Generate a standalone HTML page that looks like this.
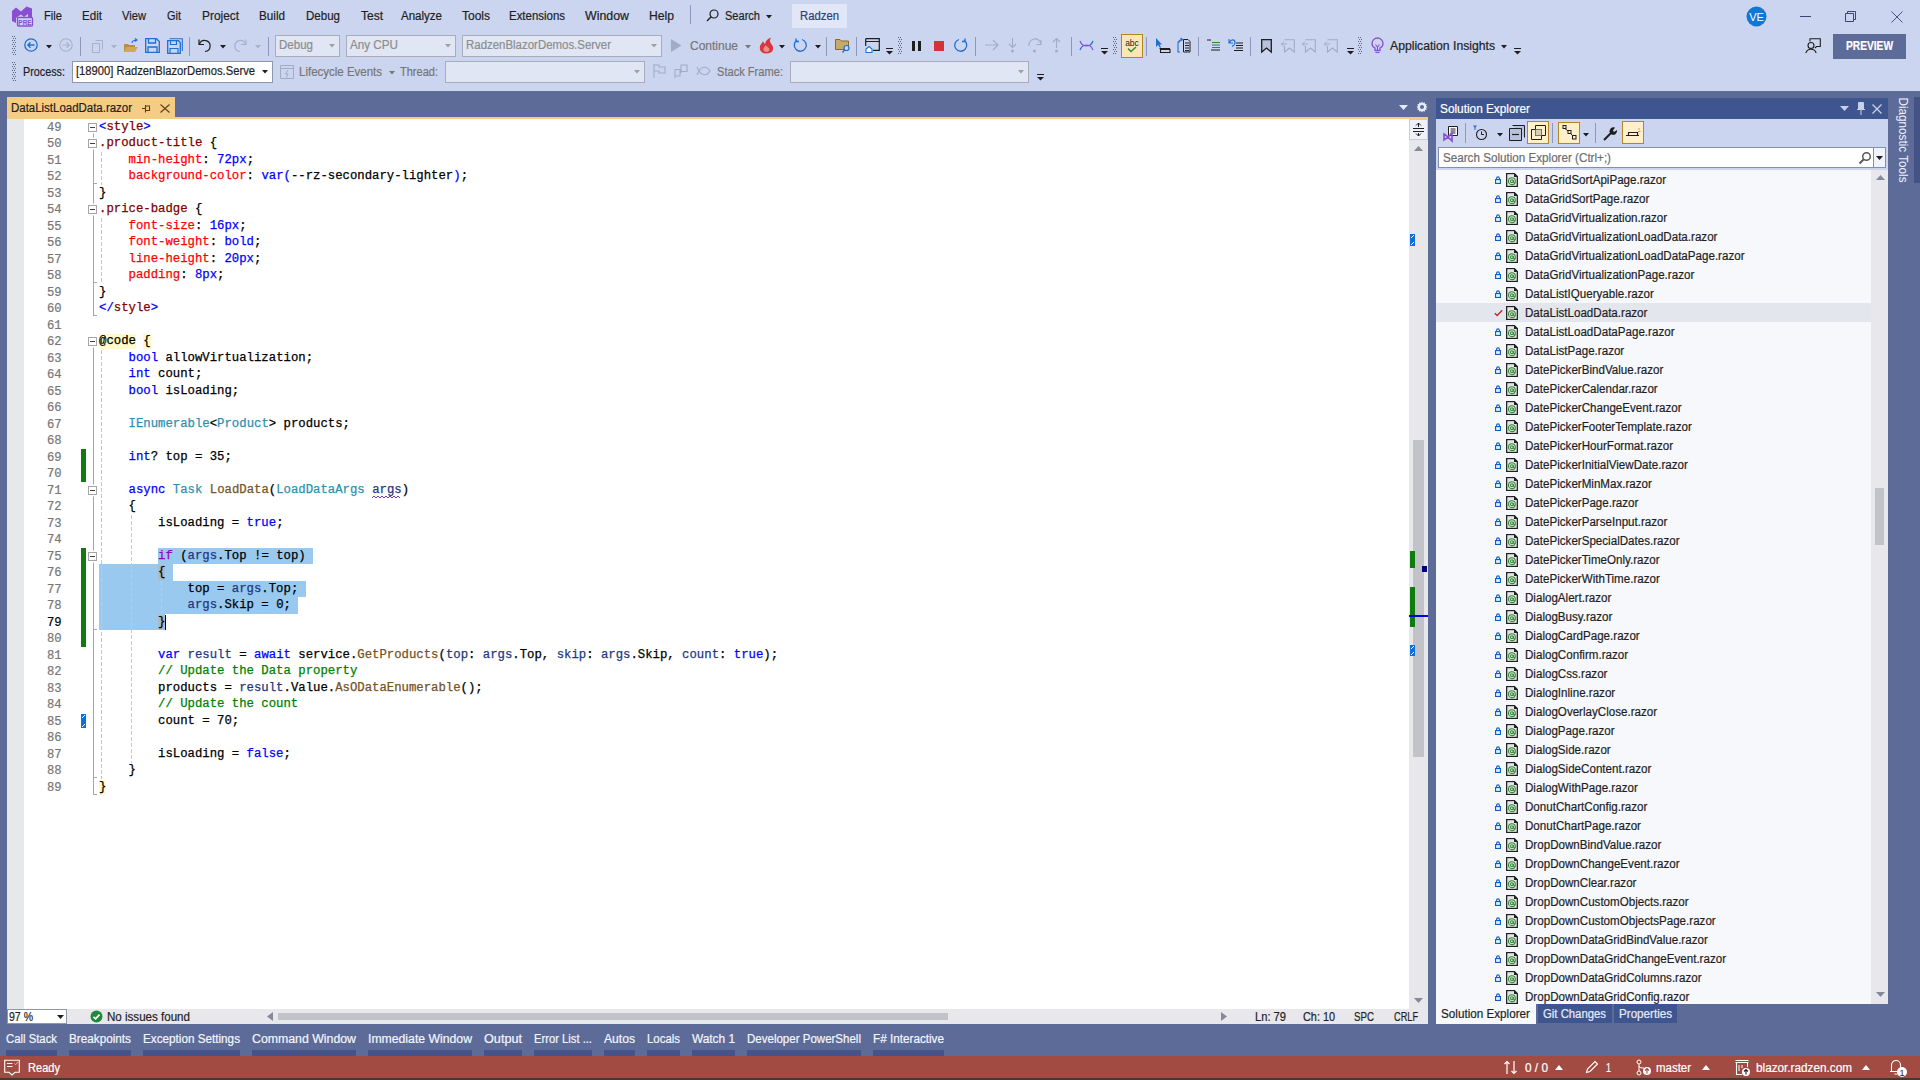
<!DOCTYPE html>
<html><head><meta charset="utf-8"><style>
html,body{margin:0;padding:0;}
body{width:1920px;height:1080px;overflow:hidden;position:relative;background:#ccd5f0;font-family:"Liberation Sans",sans-serif;}
.r{position:absolute;}
svg.r{display:block;overflow:visible}
.t{position:absolute;white-space:pre;line-height:1;transform-origin:0 0;font-family:"Liberation Sans",sans-serif;-webkit-text-stroke:0.2px currentColor;}
.cl{position:absolute;left:99px;height:16.5px;line-height:16.5px;white-space:pre;font-family:"Liberation Mono",monospace;font-size:12.31px;-webkit-text-stroke:0.25px currentColor;}
.ln{position:absolute;left:23px;margin-top:1px;width:38.5px;text-align:right;height:16.5px;line-height:16.5px;white-space:pre;font-family:"Liberation Mono",monospace;font-size:12.17px;-webkit-text-stroke:0.2px currentColor;}
</style></head><body>
<div class="r" style="left:0px;top:91px;width:1920px;height:965px;background:#5d6b99;"></div><div class="r" style="left:0px;top:1056px;width:1920px;height:24px;background:#a14b42;"></div><div class="r" style="left:0px;top:1078px;width:1920px;height:2px;background:#4a3434;"></div><div class="r" style="left:690px;top:5px;width:1px;height:19px;background:#8e98b8;"></div><div class="r" style="left:792px;top:4px;width:55px;height:24px;background:#e1e7f7;"></div><div class="r" style="left:7px;top:97px;width:168px;height:20px;background:#f5cc84;"></div><div class="r" style="left:7px;top:117px;width:1421px;height:2px;background:#f5cc84;"></div><svg class="r" style="left:142px;top:105px" width="9" height="8"><path d="M0 3.5H3.5M3.5 0V7.5" fill="none" stroke="#5c3f1a" stroke-width="1.1"/><path d="M3.5 1H7.5V5.5H3.5" fill="none" stroke="#5c3f1a" stroke-width="1.1"/></svg><svg class="r" style="left:160px;top:104px" width="10" height="9"><path d="M0.5 0.5L9.5 8.5M9.5 0.5L0.5 8.5" stroke="#5c3f1a" stroke-width="1.1"/></svg><div class="r" style="left:7px;top:119px;width:1402px;height:890px;background:#ffffff;"></div><div class="r" style="left:7px;top:119px;width:17px;height:890px;background:#e7e8ec;"></div><div class="r" style="left:1409px;top:119px;width:19px;height:890px;background:#e8e8ec;"></div><div class="r" style="left:1409px;top:119px;width:19px;height:21px;background:#eef1fb;border:1px solid #c5cde6;box-sizing:border-box;"></div><div class="r" style="left:1413px;top:440px;width:11px;height:317px;background:#c2c3c9;"></div><div class="r" style="left:7px;top:1009px;width:1421px;height:15px;background:#e8e8ec;"></div><div class="r" style="left:158.07999999999998px;top:548px;width:155.08499999999998px;height:16px;background:#99c9ef;"></div><div class="r" style="left:99px;top:564px;width:73.85px;height:17px;background:#99c9ef;"></div><div class="r" style="left:99px;top:581px;width:206.77999999999997px;height:16px;background:#99c9ef;"></div><div class="r" style="left:99px;top:597px;width:199.39499999999998px;height:17px;background:#99c9ef;"></div><div class="r" style="left:99px;top:614px;width:66.465px;height:16px;background:#99c9ef;"></div><div class="r" style="left:158.07999999999998px;top:565px;width:7.385px;height:15px;background:#a9bccc;"></div><div class="r" style="left:158.07999999999998px;top:615px;width:7.385px;height:15px;background:#a9bccc;"></div><div class="r" style="left:99px;top:333.5px;width:36.925px;height:15px;background:#fffac8;"></div><div class="r" style="left:143.31px;top:333.5px;width:7.385px;height:15px;background:#fffac8;"></div><div class="r" style="left:99px;top:779.5px;width:7.385px;height:15px;background:#fffac8;"></div><div class="r" style="left:101.0px;top:152px;width:1px;height:32.5px;background:repeating-linear-gradient(to bottom,#c8c8c8 0 4px,transparent 4px 6px)"></div><div class="r" style="left:101.0px;top:218px;width:1px;height:65.5px;background:repeating-linear-gradient(to bottom,#c8c8c8 0 4px,transparent 4px 6px)"></div><div class="r" style="left:101.0px;top:350px;width:1px;height:428.5px;background:repeating-linear-gradient(to bottom,#c8c8c8 0 4px,transparent 4px 6px)"></div><div class="r" style="left:131.0px;top:515px;width:1px;height:247.5px;background:repeating-linear-gradient(to bottom,#c8c8c8 0 4px,transparent 4px 6px)"></div><div class="r" style="left:161.0px;top:581px;width:1px;height:32.5px;background:repeating-linear-gradient(to bottom,#c8c8c8 0 4px,transparent 4px 6px)"></div><div class="r" style="left:81px;top:449px;width:5px;height:33.0px;background:#107c10;"></div><div class="r" style="left:81px;top:548px;width:5px;height:99.0px;background:#107c10;"></div><svg class="r" style="left:81px;top:714px" width="5" height="14"><rect width="5" height="14" fill="#0f6fd8"/><path d="M1 4L4 1M1 13L4 10" stroke="#fff" stroke-width="1"/></svg><div class="r" style="left:93px;top:131px;width:1px;height:184.5px;background:#a5a5a5;"></div><div class="r" style="left:93px;top:345px;width:1px;height:449.5px;background:#a5a5a5;"></div><div class="r" style="left:93px;top:183.0px;width:4px;height:1px;background:#a5a5a5;"></div><div class="r" style="left:93px;top:282.0px;width:4px;height:1px;background:#a5a5a5;"></div><div class="r" style="left:93px;top:315.0px;width:4px;height:1px;background:#a5a5a5;"></div><div class="r" style="left:93px;top:629.0px;width:4px;height:1px;background:#a5a5a5;"></div><div class="r" style="left:93px;top:777.0px;width:4px;height:1px;background:#a5a5a5;"></div><div class="r" style="left:93px;top:794.0px;width:4px;height:1px;background:#a5a5a5;"></div><div class="r" style="left:88px;top:122.5px;width:9px;height:9px;box-sizing:border-box;border:1px solid #a5a5a5;background:#fff;box-shadow:0 0 0 1.5px #fff"></div><div class="r" style="left:90px;top:126.5px;width:5px;height:1px;background:#404040;"></div><div class="r" style="left:88px;top:138.5px;width:9px;height:9px;box-sizing:border-box;border:1px solid #a5a5a5;background:#fff;box-shadow:0 0 0 1.5px #fff"></div><div class="r" style="left:90px;top:142.5px;width:5px;height:1px;background:#404040;"></div><div class="r" style="left:88px;top:204.5px;width:9px;height:9px;box-sizing:border-box;border:1px solid #a5a5a5;background:#fff;box-shadow:0 0 0 1.5px #fff"></div><div class="r" style="left:90px;top:208.5px;width:5px;height:1px;background:#404040;"></div><div class="r" style="left:88px;top:336.5px;width:9px;height:9px;box-sizing:border-box;border:1px solid #a5a5a5;background:#fff;box-shadow:0 0 0 1.5px #fff"></div><div class="r" style="left:90px;top:340.5px;width:5px;height:1px;background:#404040;"></div><div class="r" style="left:88px;top:485.5px;width:9px;height:9px;box-sizing:border-box;border:1px solid #a5a5a5;background:#fff;box-shadow:0 0 0 1.5px #fff"></div><div class="r" style="left:90px;top:489.5px;width:5px;height:1px;background:#404040;"></div><div class="r" style="left:88px;top:551.5px;width:9px;height:9px;box-sizing:border-box;border:1px solid #a5a5a5;background:#fff;box-shadow:0 0 0 1.5px #fff"></div><div class="r" style="left:90px;top:555.5px;width:5px;height:1px;background:#404040;"></div><div class="cl" style="top:119px"><span style="color:#0000ff">&lt;</span><span style="color:#800000">style</span><span style="color:#0000ff">&gt;</span></div><div class="ln" style="top:119px;color:#767676">49</div><div class="cl" style="top:135px"><span style="color:#800000">.product-title</span><span style="color:#000000"> {</span></div><div class="ln" style="top:135px;color:#767676">50</div><div class="cl" style="top:152px"><span style="color:#000000">    </span><span style="color:#ff0000">min-height</span><span style="color:#000000">: </span><span style="color:#0000ff">72px</span><span style="color:#000000">;</span></div><div class="ln" style="top:152px;color:#767676">51</div><div class="cl" style="top:168px"><span style="color:#000000">    </span><span style="color:#ff0000">background-color</span><span style="color:#000000">: </span><span style="color:#0000ff">var(</span><span style="color:#000000">--rz-secondary-lighter</span><span style="color:#0000ff">)</span><span style="color:#000000">;</span></div><div class="ln" style="top:168px;color:#767676">52</div><div class="cl" style="top:185px"><span style="color:#000000">}</span></div><div class="ln" style="top:185px;color:#767676">53</div><div class="cl" style="top:201px"><span style="color:#800000">.price-badge</span><span style="color:#000000"> {</span></div><div class="ln" style="top:201px;color:#767676">54</div><div class="cl" style="top:218px"><span style="color:#000000">    </span><span style="color:#ff0000">font-size</span><span style="color:#000000">: </span><span style="color:#0000ff">16px</span><span style="color:#000000">;</span></div><div class="ln" style="top:218px;color:#767676">55</div><div class="cl" style="top:234px"><span style="color:#000000">    </span><span style="color:#ff0000">font-weight</span><span style="color:#000000">: </span><span style="color:#0000ff">bold</span><span style="color:#000000">;</span></div><div class="ln" style="top:234px;color:#767676">56</div><div class="cl" style="top:251px"><span style="color:#000000">    </span><span style="color:#ff0000">line-height</span><span style="color:#000000">: </span><span style="color:#0000ff">20px</span><span style="color:#000000">;</span></div><div class="ln" style="top:251px;color:#767676">57</div><div class="cl" style="top:267px"><span style="color:#000000">    </span><span style="color:#ff0000">padding</span><span style="color:#000000">: </span><span style="color:#0000ff">8px</span><span style="color:#000000">;</span></div><div class="ln" style="top:267px;color:#767676">58</div><div class="cl" style="top:284px"><span style="color:#000000">}</span></div><div class="ln" style="top:284px;color:#767676">59</div><div class="cl" style="top:300px"><span style="color:#0000ff">&lt;/</span><span style="color:#800000">style</span><span style="color:#0000ff">&gt;</span></div><div class="ln" style="top:300px;color:#767676">60</div><div class="cl" style="top:317px"></div><div class="ln" style="top:317px;color:#767676">61</div><div class="cl" style="top:333px"><span style="color:#000000">@code {</span></div><div class="ln" style="top:333px;color:#767676">62</div><div class="cl" style="top:350px"><span style="color:#000000">    </span><span style="color:#0000ff">bool</span><span style="color:#000000"> allowVirtualization;</span></div><div class="ln" style="top:350px;color:#767676">63</div><div class="cl" style="top:366px"><span style="color:#000000">    </span><span style="color:#0000ff">int</span><span style="color:#000000"> count;</span></div><div class="ln" style="top:366px;color:#767676">64</div><div class="cl" style="top:383px"><span style="color:#000000">    </span><span style="color:#0000ff">bool</span><span style="color:#000000"> isLoading;</span></div><div class="ln" style="top:383px;color:#767676">65</div><div class="cl" style="top:399px"></div><div class="ln" style="top:399px;color:#767676">66</div><div class="cl" style="top:416px"><span style="color:#000000">    </span><span style="color:#2b91af">IEnumerable</span><span style="color:#000000">&lt;</span><span style="color:#2b91af">Product</span><span style="color:#000000">&gt; products;</span></div><div class="ln" style="top:416px;color:#767676">67</div><div class="cl" style="top:432px"></div><div class="ln" style="top:432px;color:#767676">68</div><div class="cl" style="top:449px"><span style="color:#000000">    </span><span style="color:#0000ff">int</span><span style="color:#000000">? top = 35;</span></div><div class="ln" style="top:449px;color:#767676">69</div><div class="cl" style="top:465px"></div><div class="ln" style="top:465px;color:#767676">70</div><div class="cl" style="top:482px"><span style="color:#000000">    </span><span style="color:#0000ff">async</span><span style="color:#000000"> </span><span style="color:#2b91af">Task</span><span style="color:#000000"> </span><span style="color:#74531f">LoadData</span><span style="color:#000000">(</span><span style="color:#2b91af">LoadDataArgs</span><span style="color:#000000"> </span><span style="color:#1f377f">args</span><span style="color:#000000">)</span></div><div class="ln" style="top:482px;color:#767676">71</div><div class="cl" style="top:498px"><span style="color:#000000">    {</span></div><div class="ln" style="top:498px;color:#767676">72</div><div class="cl" style="top:515px"><span style="color:#000000">        isLoading = </span><span style="color:#0000ff">true</span><span style="color:#000000">;</span></div><div class="ln" style="top:515px;color:#767676">73</div><div class="cl" style="top:531px"></div><div class="ln" style="top:531px;color:#767676">74</div><div class="cl" style="top:548px"><span style="color:#000000">        </span><span style="color:#8f08c4">if</span><span style="color:#000000"> (</span><span style="color:#1f377f">args</span><span style="color:#000000">.Top != top)</span></div><div class="ln" style="top:548px;color:#767676">75</div><div class="cl" style="top:564px"><span style="color:#000000">        {</span></div><div class="ln" style="top:564px;color:#767676">76</div><div class="cl" style="top:581px"><span style="color:#000000">            top = </span><span style="color:#1f377f">args</span><span style="color:#000000">.Top;</span></div><div class="ln" style="top:581px;color:#767676">77</div><div class="cl" style="top:597px"><span style="color:#000000">            </span><span style="color:#1f377f">args</span><span style="color:#000000">.Skip = 0;</span></div><div class="ln" style="top:597px;color:#767676">78</div><div class="cl" style="top:614px"><span style="color:#000000">        }</span></div><div class="ln" style="top:614px;color:#000000">79</div><div class="cl" style="top:630px"></div><div class="ln" style="top:630px;color:#767676">80</div><div class="cl" style="top:647px"><span style="color:#000000">        </span><span style="color:#0000ff">var</span><span style="color:#000000"> </span><span style="color:#1f377f">result</span><span style="color:#000000"> = </span><span style="color:#0000ff">await</span><span style="color:#000000"> service.</span><span style="color:#74531f">GetProducts</span><span style="color:#000000">(</span><span style="color:#1f377f">top</span><span style="color:#000000">: </span><span style="color:#1f377f">args</span><span style="color:#000000">.Top, </span><span style="color:#1f377f">skip</span><span style="color:#000000">: </span><span style="color:#1f377f">args</span><span style="color:#000000">.Skip, </span><span style="color:#1f377f">count</span><span style="color:#000000">: </span><span style="color:#0000ff">true</span><span style="color:#000000">);</span></div><div class="ln" style="top:647px;color:#767676">81</div><div class="cl" style="top:663px"><span style="color:#000000">        </span><span style="color:#008000">// Update the Data property</span></div><div class="ln" style="top:663px;color:#767676">82</div><div class="cl" style="top:680px"><span style="color:#000000">        products = </span><span style="color:#1f377f">result</span><span style="color:#000000">.Value.</span><span style="color:#74531f">AsODataEnumerable</span><span style="color:#000000">();</span></div><div class="ln" style="top:680px;color:#767676">83</div><div class="cl" style="top:696px"><span style="color:#000000">        </span><span style="color:#008000">// Update the count</span></div><div class="ln" style="top:696px;color:#767676">84</div><div class="cl" style="top:713px"><span style="color:#000000">        count = 70;</span></div><div class="ln" style="top:713px;color:#767676">85</div><div class="cl" style="top:729px"></div><div class="ln" style="top:729px;color:#767676">86</div><div class="cl" style="top:746px"><span style="color:#000000">        isLoading = </span><span style="color:#0000ff">false</span><span style="color:#000000">;</span></div><div class="ln" style="top:746px;color:#767676">87</div><div class="cl" style="top:762px"><span style="color:#000000">    }</span></div><div class="ln" style="top:762px;color:#767676">88</div><div class="cl" style="top:779px"><span style="color:#000000">}</span></div><div class="ln" style="top:779px;color:#767676">89</div><svg class="r" style="left:372.2px;top:495px" width="30" height="4"><path d="M0 3 L2 1 L4 3 L6 1 L8 3 L10 1 L12 3 L14 1 L16 3 L18 1 L20 3 L22 1 L24 3 L26 1 L28 3" fill="none" stroke="#6a3fc1" stroke-width="1"/></svg><div class="r" style="left:165.465px;top:615px;width:1px;height:15px;background:#000;"></div><div class="r" style="left:1410px;top:551px;width:5px;height:17px;background:#107c10;"></div><div class="r" style="left:1410px;top:587px;width:5px;height:40px;background:#107c10;"></div><div class="r" style="left:1409px;top:615px;width:19px;height:2px;background:#0000e0;"></div><div class="r" style="left:1422px;top:566px;width:5px;height:6px;background:#00007f;"></div><svg class="r" style="left:1410px;top:645px" width="5" height="11"><rect width="5" height="11" fill="#0f6fd8"/><path d="M1 4L4 1M1 10L4 7" stroke="#fff" stroke-width="1"/></svg><svg class="r" style="left:1410px;top:234px" width="5" height="12"><rect width="5" height="12" fill="#0f6fd8"/><path d="M1 4L4 1M1 11L4 8" stroke="#fff" stroke-width="1"/></svg><div class="r" style="left:1436px;top:98px;width:452px;height:21px;background:#3f5590;"></div><div class="r" style="left:1436px;top:119px;width:452px;height:51px;background:#ccd5f0;"></div><div class="r" style="left:1438px;top:147px;width:448px;height:21px;box-sizing:border-box;border:1px solid #8390ad;background:#fff"></div><div class="r" style="left:1874px;top:148px;width:11px;height:19px;background:#f0f3fc;"></div><div class="r" style="left:1873px;top:148px;width:1px;height:19px;background:#8390ad;"></div><div class="r" style="left:1436px;top:170px;width:435px;height:834px;background:#f6f8fc;"></div><div class="r" style="left:1871px;top:170px;width:17px;height:834px;background:#e8e8ec;"></div><div class="r" style="left:1875px;top:488px;width:9px;height:57px;background:#c2c3c9;"></div><svg class="r" style="left:1495px;top:175.9px" width="6" height="8" viewBox="0 0 6 8"><path d="M1.6 3.6V2.3A1.4 1.4 0 0 1 4.4 2.3V3.6" fill="none" stroke="#0a5fc4" stroke-width="1.1"/><rect x="0.55" y="3.55" width="4.9" height="3.9" fill="#e8eef8" stroke="#0a5fc4" stroke-width="1.1"/></svg><svg class="r" style="left:1506px;top:173.10000000000002px" width="12" height="14" viewBox="0 0 12 14"><path d="M0.7 0.7H8.4L11.3 3.6V13.3H0.7Z" fill="#fff" stroke="#1e1e1e" stroke-width="1.3"/><path d="M2 2H7.8V4.3H10V12H2Z" fill="#e3e4ea"/><path d="M8 0.4V4H11.6Z" fill="#1e1e1e"/><circle cx="5.9" cy="8.2" r="3.4" fill="none" stroke="#2e8b2e" stroke-width="1.1"/><circle cx="5.9" cy="8.2" r="1.4" fill="none" stroke="#2e8b2e" stroke-width="1.1"/><path d="M7.3 7V9.2C7.3 10 8.6 10.2 9.2 9" fill="none" stroke="#2e8b2e" stroke-width="1"/></svg><svg class="r" style="left:1495px;top:194.9px" width="6" height="8" viewBox="0 0 6 8"><path d="M1.6 3.6V2.3A1.4 1.4 0 0 1 4.4 2.3V3.6" fill="none" stroke="#0a5fc4" stroke-width="1.1"/><rect x="0.55" y="3.55" width="4.9" height="3.9" fill="#e8eef8" stroke="#0a5fc4" stroke-width="1.1"/></svg><svg class="r" style="left:1506px;top:192.10000000000002px" width="12" height="14" viewBox="0 0 12 14"><path d="M0.7 0.7H8.4L11.3 3.6V13.3H0.7Z" fill="#fff" stroke="#1e1e1e" stroke-width="1.3"/><path d="M2 2H7.8V4.3H10V12H2Z" fill="#e3e4ea"/><path d="M8 0.4V4H11.6Z" fill="#1e1e1e"/><circle cx="5.9" cy="8.2" r="3.4" fill="none" stroke="#2e8b2e" stroke-width="1.1"/><circle cx="5.9" cy="8.2" r="1.4" fill="none" stroke="#2e8b2e" stroke-width="1.1"/><path d="M7.3 7V9.2C7.3 10 8.6 10.2 9.2 9" fill="none" stroke="#2e8b2e" stroke-width="1"/></svg><svg class="r" style="left:1495px;top:213.9px" width="6" height="8" viewBox="0 0 6 8"><path d="M1.6 3.6V2.3A1.4 1.4 0 0 1 4.4 2.3V3.6" fill="none" stroke="#0a5fc4" stroke-width="1.1"/><rect x="0.55" y="3.55" width="4.9" height="3.9" fill="#e8eef8" stroke="#0a5fc4" stroke-width="1.1"/></svg><svg class="r" style="left:1506px;top:211.10000000000002px" width="12" height="14" viewBox="0 0 12 14"><path d="M0.7 0.7H8.4L11.3 3.6V13.3H0.7Z" fill="#fff" stroke="#1e1e1e" stroke-width="1.3"/><path d="M2 2H7.8V4.3H10V12H2Z" fill="#e3e4ea"/><path d="M8 0.4V4H11.6Z" fill="#1e1e1e"/><circle cx="5.9" cy="8.2" r="3.4" fill="none" stroke="#2e8b2e" stroke-width="1.1"/><circle cx="5.9" cy="8.2" r="1.4" fill="none" stroke="#2e8b2e" stroke-width="1.1"/><path d="M7.3 7V9.2C7.3 10 8.6 10.2 9.2 9" fill="none" stroke="#2e8b2e" stroke-width="1"/></svg><svg class="r" style="left:1495px;top:232.9px" width="6" height="8" viewBox="0 0 6 8"><path d="M1.6 3.6V2.3A1.4 1.4 0 0 1 4.4 2.3V3.6" fill="none" stroke="#0a5fc4" stroke-width="1.1"/><rect x="0.55" y="3.55" width="4.9" height="3.9" fill="#e8eef8" stroke="#0a5fc4" stroke-width="1.1"/></svg><svg class="r" style="left:1506px;top:230.10000000000002px" width="12" height="14" viewBox="0 0 12 14"><path d="M0.7 0.7H8.4L11.3 3.6V13.3H0.7Z" fill="#fff" stroke="#1e1e1e" stroke-width="1.3"/><path d="M2 2H7.8V4.3H10V12H2Z" fill="#e3e4ea"/><path d="M8 0.4V4H11.6Z" fill="#1e1e1e"/><circle cx="5.9" cy="8.2" r="3.4" fill="none" stroke="#2e8b2e" stroke-width="1.1"/><circle cx="5.9" cy="8.2" r="1.4" fill="none" stroke="#2e8b2e" stroke-width="1.1"/><path d="M7.3 7V9.2C7.3 10 8.6 10.2 9.2 9" fill="none" stroke="#2e8b2e" stroke-width="1"/></svg><svg class="r" style="left:1495px;top:251.9px" width="6" height="8" viewBox="0 0 6 8"><path d="M1.6 3.6V2.3A1.4 1.4 0 0 1 4.4 2.3V3.6" fill="none" stroke="#0a5fc4" stroke-width="1.1"/><rect x="0.55" y="3.55" width="4.9" height="3.9" fill="#e8eef8" stroke="#0a5fc4" stroke-width="1.1"/></svg><svg class="r" style="left:1506px;top:249.10000000000002px" width="12" height="14" viewBox="0 0 12 14"><path d="M0.7 0.7H8.4L11.3 3.6V13.3H0.7Z" fill="#fff" stroke="#1e1e1e" stroke-width="1.3"/><path d="M2 2H7.8V4.3H10V12H2Z" fill="#e3e4ea"/><path d="M8 0.4V4H11.6Z" fill="#1e1e1e"/><circle cx="5.9" cy="8.2" r="3.4" fill="none" stroke="#2e8b2e" stroke-width="1.1"/><circle cx="5.9" cy="8.2" r="1.4" fill="none" stroke="#2e8b2e" stroke-width="1.1"/><path d="M7.3 7V9.2C7.3 10 8.6 10.2 9.2 9" fill="none" stroke="#2e8b2e" stroke-width="1"/></svg><svg class="r" style="left:1495px;top:270.90000000000003px" width="6" height="8" viewBox="0 0 6 8"><path d="M1.6 3.6V2.3A1.4 1.4 0 0 1 4.4 2.3V3.6" fill="none" stroke="#0a5fc4" stroke-width="1.1"/><rect x="0.55" y="3.55" width="4.9" height="3.9" fill="#e8eef8" stroke="#0a5fc4" stroke-width="1.1"/></svg><svg class="r" style="left:1506px;top:268.1px" width="12" height="14" viewBox="0 0 12 14"><path d="M0.7 0.7H8.4L11.3 3.6V13.3H0.7Z" fill="#fff" stroke="#1e1e1e" stroke-width="1.3"/><path d="M2 2H7.8V4.3H10V12H2Z" fill="#e3e4ea"/><path d="M8 0.4V4H11.6Z" fill="#1e1e1e"/><circle cx="5.9" cy="8.2" r="3.4" fill="none" stroke="#2e8b2e" stroke-width="1.1"/><circle cx="5.9" cy="8.2" r="1.4" fill="none" stroke="#2e8b2e" stroke-width="1.1"/><path d="M7.3 7V9.2C7.3 10 8.6 10.2 9.2 9" fill="none" stroke="#2e8b2e" stroke-width="1"/></svg><svg class="r" style="left:1495px;top:289.90000000000003px" width="6" height="8" viewBox="0 0 6 8"><path d="M1.6 3.6V2.3A1.4 1.4 0 0 1 4.4 2.3V3.6" fill="none" stroke="#0a5fc4" stroke-width="1.1"/><rect x="0.55" y="3.55" width="4.9" height="3.9" fill="#e8eef8" stroke="#0a5fc4" stroke-width="1.1"/></svg><svg class="r" style="left:1506px;top:287.1px" width="12" height="14" viewBox="0 0 12 14"><path d="M0.7 0.7H8.4L11.3 3.6V13.3H0.7Z" fill="#fff" stroke="#1e1e1e" stroke-width="1.3"/><path d="M2 2H7.8V4.3H10V12H2Z" fill="#e3e4ea"/><path d="M8 0.4V4H11.6Z" fill="#1e1e1e"/><circle cx="5.9" cy="8.2" r="3.4" fill="none" stroke="#2e8b2e" stroke-width="1.1"/><circle cx="5.9" cy="8.2" r="1.4" fill="none" stroke="#2e8b2e" stroke-width="1.1"/><path d="M7.3 7V9.2C7.3 10 8.6 10.2 9.2 9" fill="none" stroke="#2e8b2e" stroke-width="1"/></svg><div class="r" style="left:1436px;top:303.3px;width:435px;height:19px;background:#e4e6ee;"></div><svg class="r" style="left:1494px;top:309.3px" width="9" height="8" viewBox="0 0 9 8"><path d="M0.8 4.2L3.2 6.6L8.2 1.2" fill="none" stroke="#c4262d" stroke-width="1.4"/></svg><svg class="r" style="left:1506px;top:306.1px" width="12" height="14" viewBox="0 0 12 14"><path d="M0.7 0.7H8.4L11.3 3.6V13.3H0.7Z" fill="#fff" stroke="#1e1e1e" stroke-width="1.3"/><path d="M2 2H7.8V4.3H10V12H2Z" fill="#e3e4ea"/><path d="M8 0.4V4H11.6Z" fill="#1e1e1e"/><circle cx="5.9" cy="8.2" r="3.4" fill="none" stroke="#2e8b2e" stroke-width="1.1"/><circle cx="5.9" cy="8.2" r="1.4" fill="none" stroke="#2e8b2e" stroke-width="1.1"/><path d="M7.3 7V9.2C7.3 10 8.6 10.2 9.2 9" fill="none" stroke="#2e8b2e" stroke-width="1"/></svg><svg class="r" style="left:1495px;top:327.90000000000003px" width="6" height="8" viewBox="0 0 6 8"><path d="M1.6 3.6V2.3A1.4 1.4 0 0 1 4.4 2.3V3.6" fill="none" stroke="#0a5fc4" stroke-width="1.1"/><rect x="0.55" y="3.55" width="4.9" height="3.9" fill="#e8eef8" stroke="#0a5fc4" stroke-width="1.1"/></svg><svg class="r" style="left:1506px;top:325.1px" width="12" height="14" viewBox="0 0 12 14"><path d="M0.7 0.7H8.4L11.3 3.6V13.3H0.7Z" fill="#fff" stroke="#1e1e1e" stroke-width="1.3"/><path d="M2 2H7.8V4.3H10V12H2Z" fill="#e3e4ea"/><path d="M8 0.4V4H11.6Z" fill="#1e1e1e"/><circle cx="5.9" cy="8.2" r="3.4" fill="none" stroke="#2e8b2e" stroke-width="1.1"/><circle cx="5.9" cy="8.2" r="1.4" fill="none" stroke="#2e8b2e" stroke-width="1.1"/><path d="M7.3 7V9.2C7.3 10 8.6 10.2 9.2 9" fill="none" stroke="#2e8b2e" stroke-width="1"/></svg><svg class="r" style="left:1495px;top:346.90000000000003px" width="6" height="8" viewBox="0 0 6 8"><path d="M1.6 3.6V2.3A1.4 1.4 0 0 1 4.4 2.3V3.6" fill="none" stroke="#0a5fc4" stroke-width="1.1"/><rect x="0.55" y="3.55" width="4.9" height="3.9" fill="#e8eef8" stroke="#0a5fc4" stroke-width="1.1"/></svg><svg class="r" style="left:1506px;top:344.1px" width="12" height="14" viewBox="0 0 12 14"><path d="M0.7 0.7H8.4L11.3 3.6V13.3H0.7Z" fill="#fff" stroke="#1e1e1e" stroke-width="1.3"/><path d="M2 2H7.8V4.3H10V12H2Z" fill="#e3e4ea"/><path d="M8 0.4V4H11.6Z" fill="#1e1e1e"/><circle cx="5.9" cy="8.2" r="3.4" fill="none" stroke="#2e8b2e" stroke-width="1.1"/><circle cx="5.9" cy="8.2" r="1.4" fill="none" stroke="#2e8b2e" stroke-width="1.1"/><path d="M7.3 7V9.2C7.3 10 8.6 10.2 9.2 9" fill="none" stroke="#2e8b2e" stroke-width="1"/></svg><svg class="r" style="left:1495px;top:365.90000000000003px" width="6" height="8" viewBox="0 0 6 8"><path d="M1.6 3.6V2.3A1.4 1.4 0 0 1 4.4 2.3V3.6" fill="none" stroke="#0a5fc4" stroke-width="1.1"/><rect x="0.55" y="3.55" width="4.9" height="3.9" fill="#e8eef8" stroke="#0a5fc4" stroke-width="1.1"/></svg><svg class="r" style="left:1506px;top:363.1px" width="12" height="14" viewBox="0 0 12 14"><path d="M0.7 0.7H8.4L11.3 3.6V13.3H0.7Z" fill="#fff" stroke="#1e1e1e" stroke-width="1.3"/><path d="M2 2H7.8V4.3H10V12H2Z" fill="#e3e4ea"/><path d="M8 0.4V4H11.6Z" fill="#1e1e1e"/><circle cx="5.9" cy="8.2" r="3.4" fill="none" stroke="#2e8b2e" stroke-width="1.1"/><circle cx="5.9" cy="8.2" r="1.4" fill="none" stroke="#2e8b2e" stroke-width="1.1"/><path d="M7.3 7V9.2C7.3 10 8.6 10.2 9.2 9" fill="none" stroke="#2e8b2e" stroke-width="1"/></svg><svg class="r" style="left:1495px;top:384.90000000000003px" width="6" height="8" viewBox="0 0 6 8"><path d="M1.6 3.6V2.3A1.4 1.4 0 0 1 4.4 2.3V3.6" fill="none" stroke="#0a5fc4" stroke-width="1.1"/><rect x="0.55" y="3.55" width="4.9" height="3.9" fill="#e8eef8" stroke="#0a5fc4" stroke-width="1.1"/></svg><svg class="r" style="left:1506px;top:382.1px" width="12" height="14" viewBox="0 0 12 14"><path d="M0.7 0.7H8.4L11.3 3.6V13.3H0.7Z" fill="#fff" stroke="#1e1e1e" stroke-width="1.3"/><path d="M2 2H7.8V4.3H10V12H2Z" fill="#e3e4ea"/><path d="M8 0.4V4H11.6Z" fill="#1e1e1e"/><circle cx="5.9" cy="8.2" r="3.4" fill="none" stroke="#2e8b2e" stroke-width="1.1"/><circle cx="5.9" cy="8.2" r="1.4" fill="none" stroke="#2e8b2e" stroke-width="1.1"/><path d="M7.3 7V9.2C7.3 10 8.6 10.2 9.2 9" fill="none" stroke="#2e8b2e" stroke-width="1"/></svg><svg class="r" style="left:1495px;top:403.90000000000003px" width="6" height="8" viewBox="0 0 6 8"><path d="M1.6 3.6V2.3A1.4 1.4 0 0 1 4.4 2.3V3.6" fill="none" stroke="#0a5fc4" stroke-width="1.1"/><rect x="0.55" y="3.55" width="4.9" height="3.9" fill="#e8eef8" stroke="#0a5fc4" stroke-width="1.1"/></svg><svg class="r" style="left:1506px;top:401.1px" width="12" height="14" viewBox="0 0 12 14"><path d="M0.7 0.7H8.4L11.3 3.6V13.3H0.7Z" fill="#fff" stroke="#1e1e1e" stroke-width="1.3"/><path d="M2 2H7.8V4.3H10V12H2Z" fill="#e3e4ea"/><path d="M8 0.4V4H11.6Z" fill="#1e1e1e"/><circle cx="5.9" cy="8.2" r="3.4" fill="none" stroke="#2e8b2e" stroke-width="1.1"/><circle cx="5.9" cy="8.2" r="1.4" fill="none" stroke="#2e8b2e" stroke-width="1.1"/><path d="M7.3 7V9.2C7.3 10 8.6 10.2 9.2 9" fill="none" stroke="#2e8b2e" stroke-width="1"/></svg><svg class="r" style="left:1495px;top:422.90000000000003px" width="6" height="8" viewBox="0 0 6 8"><path d="M1.6 3.6V2.3A1.4 1.4 0 0 1 4.4 2.3V3.6" fill="none" stroke="#0a5fc4" stroke-width="1.1"/><rect x="0.55" y="3.55" width="4.9" height="3.9" fill="#e8eef8" stroke="#0a5fc4" stroke-width="1.1"/></svg><svg class="r" style="left:1506px;top:420.1px" width="12" height="14" viewBox="0 0 12 14"><path d="M0.7 0.7H8.4L11.3 3.6V13.3H0.7Z" fill="#fff" stroke="#1e1e1e" stroke-width="1.3"/><path d="M2 2H7.8V4.3H10V12H2Z" fill="#e3e4ea"/><path d="M8 0.4V4H11.6Z" fill="#1e1e1e"/><circle cx="5.9" cy="8.2" r="3.4" fill="none" stroke="#2e8b2e" stroke-width="1.1"/><circle cx="5.9" cy="8.2" r="1.4" fill="none" stroke="#2e8b2e" stroke-width="1.1"/><path d="M7.3 7V9.2C7.3 10 8.6 10.2 9.2 9" fill="none" stroke="#2e8b2e" stroke-width="1"/></svg><svg class="r" style="left:1495px;top:441.90000000000003px" width="6" height="8" viewBox="0 0 6 8"><path d="M1.6 3.6V2.3A1.4 1.4 0 0 1 4.4 2.3V3.6" fill="none" stroke="#0a5fc4" stroke-width="1.1"/><rect x="0.55" y="3.55" width="4.9" height="3.9" fill="#e8eef8" stroke="#0a5fc4" stroke-width="1.1"/></svg><svg class="r" style="left:1506px;top:439.1px" width="12" height="14" viewBox="0 0 12 14"><path d="M0.7 0.7H8.4L11.3 3.6V13.3H0.7Z" fill="#fff" stroke="#1e1e1e" stroke-width="1.3"/><path d="M2 2H7.8V4.3H10V12H2Z" fill="#e3e4ea"/><path d="M8 0.4V4H11.6Z" fill="#1e1e1e"/><circle cx="5.9" cy="8.2" r="3.4" fill="none" stroke="#2e8b2e" stroke-width="1.1"/><circle cx="5.9" cy="8.2" r="1.4" fill="none" stroke="#2e8b2e" stroke-width="1.1"/><path d="M7.3 7V9.2C7.3 10 8.6 10.2 9.2 9" fill="none" stroke="#2e8b2e" stroke-width="1"/></svg><svg class="r" style="left:1495px;top:460.90000000000003px" width="6" height="8" viewBox="0 0 6 8"><path d="M1.6 3.6V2.3A1.4 1.4 0 0 1 4.4 2.3V3.6" fill="none" stroke="#0a5fc4" stroke-width="1.1"/><rect x="0.55" y="3.55" width="4.9" height="3.9" fill="#e8eef8" stroke="#0a5fc4" stroke-width="1.1"/></svg><svg class="r" style="left:1506px;top:458.1px" width="12" height="14" viewBox="0 0 12 14"><path d="M0.7 0.7H8.4L11.3 3.6V13.3H0.7Z" fill="#fff" stroke="#1e1e1e" stroke-width="1.3"/><path d="M2 2H7.8V4.3H10V12H2Z" fill="#e3e4ea"/><path d="M8 0.4V4H11.6Z" fill="#1e1e1e"/><circle cx="5.9" cy="8.2" r="3.4" fill="none" stroke="#2e8b2e" stroke-width="1.1"/><circle cx="5.9" cy="8.2" r="1.4" fill="none" stroke="#2e8b2e" stroke-width="1.1"/><path d="M7.3 7V9.2C7.3 10 8.6 10.2 9.2 9" fill="none" stroke="#2e8b2e" stroke-width="1"/></svg><svg class="r" style="left:1495px;top:479.90000000000003px" width="6" height="8" viewBox="0 0 6 8"><path d="M1.6 3.6V2.3A1.4 1.4 0 0 1 4.4 2.3V3.6" fill="none" stroke="#0a5fc4" stroke-width="1.1"/><rect x="0.55" y="3.55" width="4.9" height="3.9" fill="#e8eef8" stroke="#0a5fc4" stroke-width="1.1"/></svg><svg class="r" style="left:1506px;top:477.1px" width="12" height="14" viewBox="0 0 12 14"><path d="M0.7 0.7H8.4L11.3 3.6V13.3H0.7Z" fill="#fff" stroke="#1e1e1e" stroke-width="1.3"/><path d="M2 2H7.8V4.3H10V12H2Z" fill="#e3e4ea"/><path d="M8 0.4V4H11.6Z" fill="#1e1e1e"/><circle cx="5.9" cy="8.2" r="3.4" fill="none" stroke="#2e8b2e" stroke-width="1.1"/><circle cx="5.9" cy="8.2" r="1.4" fill="none" stroke="#2e8b2e" stroke-width="1.1"/><path d="M7.3 7V9.2C7.3 10 8.6 10.2 9.2 9" fill="none" stroke="#2e8b2e" stroke-width="1"/></svg><svg class="r" style="left:1495px;top:498.90000000000003px" width="6" height="8" viewBox="0 0 6 8"><path d="M1.6 3.6V2.3A1.4 1.4 0 0 1 4.4 2.3V3.6" fill="none" stroke="#0a5fc4" stroke-width="1.1"/><rect x="0.55" y="3.55" width="4.9" height="3.9" fill="#e8eef8" stroke="#0a5fc4" stroke-width="1.1"/></svg><svg class="r" style="left:1506px;top:496.1px" width="12" height="14" viewBox="0 0 12 14"><path d="M0.7 0.7H8.4L11.3 3.6V13.3H0.7Z" fill="#fff" stroke="#1e1e1e" stroke-width="1.3"/><path d="M2 2H7.8V4.3H10V12H2Z" fill="#e3e4ea"/><path d="M8 0.4V4H11.6Z" fill="#1e1e1e"/><circle cx="5.9" cy="8.2" r="3.4" fill="none" stroke="#2e8b2e" stroke-width="1.1"/><circle cx="5.9" cy="8.2" r="1.4" fill="none" stroke="#2e8b2e" stroke-width="1.1"/><path d="M7.3 7V9.2C7.3 10 8.6 10.2 9.2 9" fill="none" stroke="#2e8b2e" stroke-width="1"/></svg><svg class="r" style="left:1495px;top:517.9px" width="6" height="8" viewBox="0 0 6 8"><path d="M1.6 3.6V2.3A1.4 1.4 0 0 1 4.4 2.3V3.6" fill="none" stroke="#0a5fc4" stroke-width="1.1"/><rect x="0.55" y="3.55" width="4.9" height="3.9" fill="#e8eef8" stroke="#0a5fc4" stroke-width="1.1"/></svg><svg class="r" style="left:1506px;top:515.0999999999999px" width="12" height="14" viewBox="0 0 12 14"><path d="M0.7 0.7H8.4L11.3 3.6V13.3H0.7Z" fill="#fff" stroke="#1e1e1e" stroke-width="1.3"/><path d="M2 2H7.8V4.3H10V12H2Z" fill="#e3e4ea"/><path d="M8 0.4V4H11.6Z" fill="#1e1e1e"/><circle cx="5.9" cy="8.2" r="3.4" fill="none" stroke="#2e8b2e" stroke-width="1.1"/><circle cx="5.9" cy="8.2" r="1.4" fill="none" stroke="#2e8b2e" stroke-width="1.1"/><path d="M7.3 7V9.2C7.3 10 8.6 10.2 9.2 9" fill="none" stroke="#2e8b2e" stroke-width="1"/></svg><svg class="r" style="left:1495px;top:536.9px" width="6" height="8" viewBox="0 0 6 8"><path d="M1.6 3.6V2.3A1.4 1.4 0 0 1 4.4 2.3V3.6" fill="none" stroke="#0a5fc4" stroke-width="1.1"/><rect x="0.55" y="3.55" width="4.9" height="3.9" fill="#e8eef8" stroke="#0a5fc4" stroke-width="1.1"/></svg><svg class="r" style="left:1506px;top:534.0999999999999px" width="12" height="14" viewBox="0 0 12 14"><path d="M0.7 0.7H8.4L11.3 3.6V13.3H0.7Z" fill="#fff" stroke="#1e1e1e" stroke-width="1.3"/><path d="M2 2H7.8V4.3H10V12H2Z" fill="#e3e4ea"/><path d="M8 0.4V4H11.6Z" fill="#1e1e1e"/><circle cx="5.9" cy="8.2" r="3.4" fill="none" stroke="#2e8b2e" stroke-width="1.1"/><circle cx="5.9" cy="8.2" r="1.4" fill="none" stroke="#2e8b2e" stroke-width="1.1"/><path d="M7.3 7V9.2C7.3 10 8.6 10.2 9.2 9" fill="none" stroke="#2e8b2e" stroke-width="1"/></svg><svg class="r" style="left:1495px;top:555.9px" width="6" height="8" viewBox="0 0 6 8"><path d="M1.6 3.6V2.3A1.4 1.4 0 0 1 4.4 2.3V3.6" fill="none" stroke="#0a5fc4" stroke-width="1.1"/><rect x="0.55" y="3.55" width="4.9" height="3.9" fill="#e8eef8" stroke="#0a5fc4" stroke-width="1.1"/></svg><svg class="r" style="left:1506px;top:553.0999999999999px" width="12" height="14" viewBox="0 0 12 14"><path d="M0.7 0.7H8.4L11.3 3.6V13.3H0.7Z" fill="#fff" stroke="#1e1e1e" stroke-width="1.3"/><path d="M2 2H7.8V4.3H10V12H2Z" fill="#e3e4ea"/><path d="M8 0.4V4H11.6Z" fill="#1e1e1e"/><circle cx="5.9" cy="8.2" r="3.4" fill="none" stroke="#2e8b2e" stroke-width="1.1"/><circle cx="5.9" cy="8.2" r="1.4" fill="none" stroke="#2e8b2e" stroke-width="1.1"/><path d="M7.3 7V9.2C7.3 10 8.6 10.2 9.2 9" fill="none" stroke="#2e8b2e" stroke-width="1"/></svg><svg class="r" style="left:1495px;top:574.9px" width="6" height="8" viewBox="0 0 6 8"><path d="M1.6 3.6V2.3A1.4 1.4 0 0 1 4.4 2.3V3.6" fill="none" stroke="#0a5fc4" stroke-width="1.1"/><rect x="0.55" y="3.55" width="4.9" height="3.9" fill="#e8eef8" stroke="#0a5fc4" stroke-width="1.1"/></svg><svg class="r" style="left:1506px;top:572.0999999999999px" width="12" height="14" viewBox="0 0 12 14"><path d="M0.7 0.7H8.4L11.3 3.6V13.3H0.7Z" fill="#fff" stroke="#1e1e1e" stroke-width="1.3"/><path d="M2 2H7.8V4.3H10V12H2Z" fill="#e3e4ea"/><path d="M8 0.4V4H11.6Z" fill="#1e1e1e"/><circle cx="5.9" cy="8.2" r="3.4" fill="none" stroke="#2e8b2e" stroke-width="1.1"/><circle cx="5.9" cy="8.2" r="1.4" fill="none" stroke="#2e8b2e" stroke-width="1.1"/><path d="M7.3 7V9.2C7.3 10 8.6 10.2 9.2 9" fill="none" stroke="#2e8b2e" stroke-width="1"/></svg><svg class="r" style="left:1495px;top:593.9px" width="6" height="8" viewBox="0 0 6 8"><path d="M1.6 3.6V2.3A1.4 1.4 0 0 1 4.4 2.3V3.6" fill="none" stroke="#0a5fc4" stroke-width="1.1"/><rect x="0.55" y="3.55" width="4.9" height="3.9" fill="#e8eef8" stroke="#0a5fc4" stroke-width="1.1"/></svg><svg class="r" style="left:1506px;top:591.0999999999999px" width="12" height="14" viewBox="0 0 12 14"><path d="M0.7 0.7H8.4L11.3 3.6V13.3H0.7Z" fill="#fff" stroke="#1e1e1e" stroke-width="1.3"/><path d="M2 2H7.8V4.3H10V12H2Z" fill="#e3e4ea"/><path d="M8 0.4V4H11.6Z" fill="#1e1e1e"/><circle cx="5.9" cy="8.2" r="3.4" fill="none" stroke="#2e8b2e" stroke-width="1.1"/><circle cx="5.9" cy="8.2" r="1.4" fill="none" stroke="#2e8b2e" stroke-width="1.1"/><path d="M7.3 7V9.2C7.3 10 8.6 10.2 9.2 9" fill="none" stroke="#2e8b2e" stroke-width="1"/></svg><svg class="r" style="left:1495px;top:612.9px" width="6" height="8" viewBox="0 0 6 8"><path d="M1.6 3.6V2.3A1.4 1.4 0 0 1 4.4 2.3V3.6" fill="none" stroke="#0a5fc4" stroke-width="1.1"/><rect x="0.55" y="3.55" width="4.9" height="3.9" fill="#e8eef8" stroke="#0a5fc4" stroke-width="1.1"/></svg><svg class="r" style="left:1506px;top:610.0999999999999px" width="12" height="14" viewBox="0 0 12 14"><path d="M0.7 0.7H8.4L11.3 3.6V13.3H0.7Z" fill="#fff" stroke="#1e1e1e" stroke-width="1.3"/><path d="M2 2H7.8V4.3H10V12H2Z" fill="#e3e4ea"/><path d="M8 0.4V4H11.6Z" fill="#1e1e1e"/><circle cx="5.9" cy="8.2" r="3.4" fill="none" stroke="#2e8b2e" stroke-width="1.1"/><circle cx="5.9" cy="8.2" r="1.4" fill="none" stroke="#2e8b2e" stroke-width="1.1"/><path d="M7.3 7V9.2C7.3 10 8.6 10.2 9.2 9" fill="none" stroke="#2e8b2e" stroke-width="1"/></svg><svg class="r" style="left:1495px;top:631.9px" width="6" height="8" viewBox="0 0 6 8"><path d="M1.6 3.6V2.3A1.4 1.4 0 0 1 4.4 2.3V3.6" fill="none" stroke="#0a5fc4" stroke-width="1.1"/><rect x="0.55" y="3.55" width="4.9" height="3.9" fill="#e8eef8" stroke="#0a5fc4" stroke-width="1.1"/></svg><svg class="r" style="left:1506px;top:629.0999999999999px" width="12" height="14" viewBox="0 0 12 14"><path d="M0.7 0.7H8.4L11.3 3.6V13.3H0.7Z" fill="#fff" stroke="#1e1e1e" stroke-width="1.3"/><path d="M2 2H7.8V4.3H10V12H2Z" fill="#e3e4ea"/><path d="M8 0.4V4H11.6Z" fill="#1e1e1e"/><circle cx="5.9" cy="8.2" r="3.4" fill="none" stroke="#2e8b2e" stroke-width="1.1"/><circle cx="5.9" cy="8.2" r="1.4" fill="none" stroke="#2e8b2e" stroke-width="1.1"/><path d="M7.3 7V9.2C7.3 10 8.6 10.2 9.2 9" fill="none" stroke="#2e8b2e" stroke-width="1"/></svg><svg class="r" style="left:1495px;top:650.9px" width="6" height="8" viewBox="0 0 6 8"><path d="M1.6 3.6V2.3A1.4 1.4 0 0 1 4.4 2.3V3.6" fill="none" stroke="#0a5fc4" stroke-width="1.1"/><rect x="0.55" y="3.55" width="4.9" height="3.9" fill="#e8eef8" stroke="#0a5fc4" stroke-width="1.1"/></svg><svg class="r" style="left:1506px;top:648.0999999999999px" width="12" height="14" viewBox="0 0 12 14"><path d="M0.7 0.7H8.4L11.3 3.6V13.3H0.7Z" fill="#fff" stroke="#1e1e1e" stroke-width="1.3"/><path d="M2 2H7.8V4.3H10V12H2Z" fill="#e3e4ea"/><path d="M8 0.4V4H11.6Z" fill="#1e1e1e"/><circle cx="5.9" cy="8.2" r="3.4" fill="none" stroke="#2e8b2e" stroke-width="1.1"/><circle cx="5.9" cy="8.2" r="1.4" fill="none" stroke="#2e8b2e" stroke-width="1.1"/><path d="M7.3 7V9.2C7.3 10 8.6 10.2 9.2 9" fill="none" stroke="#2e8b2e" stroke-width="1"/></svg><svg class="r" style="left:1495px;top:669.9px" width="6" height="8" viewBox="0 0 6 8"><path d="M1.6 3.6V2.3A1.4 1.4 0 0 1 4.4 2.3V3.6" fill="none" stroke="#0a5fc4" stroke-width="1.1"/><rect x="0.55" y="3.55" width="4.9" height="3.9" fill="#e8eef8" stroke="#0a5fc4" stroke-width="1.1"/></svg><svg class="r" style="left:1506px;top:667.0999999999999px" width="12" height="14" viewBox="0 0 12 14"><path d="M0.7 0.7H8.4L11.3 3.6V13.3H0.7Z" fill="#fff" stroke="#1e1e1e" stroke-width="1.3"/><path d="M2 2H7.8V4.3H10V12H2Z" fill="#e3e4ea"/><path d="M8 0.4V4H11.6Z" fill="#1e1e1e"/><circle cx="5.9" cy="8.2" r="3.4" fill="none" stroke="#2e8b2e" stroke-width="1.1"/><circle cx="5.9" cy="8.2" r="1.4" fill="none" stroke="#2e8b2e" stroke-width="1.1"/><path d="M7.3 7V9.2C7.3 10 8.6 10.2 9.2 9" fill="none" stroke="#2e8b2e" stroke-width="1"/></svg><svg class="r" style="left:1495px;top:688.9px" width="6" height="8" viewBox="0 0 6 8"><path d="M1.6 3.6V2.3A1.4 1.4 0 0 1 4.4 2.3V3.6" fill="none" stroke="#0a5fc4" stroke-width="1.1"/><rect x="0.55" y="3.55" width="4.9" height="3.9" fill="#e8eef8" stroke="#0a5fc4" stroke-width="1.1"/></svg><svg class="r" style="left:1506px;top:686.0999999999999px" width="12" height="14" viewBox="0 0 12 14"><path d="M0.7 0.7H8.4L11.3 3.6V13.3H0.7Z" fill="#fff" stroke="#1e1e1e" stroke-width="1.3"/><path d="M2 2H7.8V4.3H10V12H2Z" fill="#e3e4ea"/><path d="M8 0.4V4H11.6Z" fill="#1e1e1e"/><circle cx="5.9" cy="8.2" r="3.4" fill="none" stroke="#2e8b2e" stroke-width="1.1"/><circle cx="5.9" cy="8.2" r="1.4" fill="none" stroke="#2e8b2e" stroke-width="1.1"/><path d="M7.3 7V9.2C7.3 10 8.6 10.2 9.2 9" fill="none" stroke="#2e8b2e" stroke-width="1"/></svg><svg class="r" style="left:1495px;top:707.9px" width="6" height="8" viewBox="0 0 6 8"><path d="M1.6 3.6V2.3A1.4 1.4 0 0 1 4.4 2.3V3.6" fill="none" stroke="#0a5fc4" stroke-width="1.1"/><rect x="0.55" y="3.55" width="4.9" height="3.9" fill="#e8eef8" stroke="#0a5fc4" stroke-width="1.1"/></svg><svg class="r" style="left:1506px;top:705.0999999999999px" width="12" height="14" viewBox="0 0 12 14"><path d="M0.7 0.7H8.4L11.3 3.6V13.3H0.7Z" fill="#fff" stroke="#1e1e1e" stroke-width="1.3"/><path d="M2 2H7.8V4.3H10V12H2Z" fill="#e3e4ea"/><path d="M8 0.4V4H11.6Z" fill="#1e1e1e"/><circle cx="5.9" cy="8.2" r="3.4" fill="none" stroke="#2e8b2e" stroke-width="1.1"/><circle cx="5.9" cy="8.2" r="1.4" fill="none" stroke="#2e8b2e" stroke-width="1.1"/><path d="M7.3 7V9.2C7.3 10 8.6 10.2 9.2 9" fill="none" stroke="#2e8b2e" stroke-width="1"/></svg><svg class="r" style="left:1495px;top:726.9px" width="6" height="8" viewBox="0 0 6 8"><path d="M1.6 3.6V2.3A1.4 1.4 0 0 1 4.4 2.3V3.6" fill="none" stroke="#0a5fc4" stroke-width="1.1"/><rect x="0.55" y="3.55" width="4.9" height="3.9" fill="#e8eef8" stroke="#0a5fc4" stroke-width="1.1"/></svg><svg class="r" style="left:1506px;top:724.0999999999999px" width="12" height="14" viewBox="0 0 12 14"><path d="M0.7 0.7H8.4L11.3 3.6V13.3H0.7Z" fill="#fff" stroke="#1e1e1e" stroke-width="1.3"/><path d="M2 2H7.8V4.3H10V12H2Z" fill="#e3e4ea"/><path d="M8 0.4V4H11.6Z" fill="#1e1e1e"/><circle cx="5.9" cy="8.2" r="3.4" fill="none" stroke="#2e8b2e" stroke-width="1.1"/><circle cx="5.9" cy="8.2" r="1.4" fill="none" stroke="#2e8b2e" stroke-width="1.1"/><path d="M7.3 7V9.2C7.3 10 8.6 10.2 9.2 9" fill="none" stroke="#2e8b2e" stroke-width="1"/></svg><svg class="r" style="left:1495px;top:745.9px" width="6" height="8" viewBox="0 0 6 8"><path d="M1.6 3.6V2.3A1.4 1.4 0 0 1 4.4 2.3V3.6" fill="none" stroke="#0a5fc4" stroke-width="1.1"/><rect x="0.55" y="3.55" width="4.9" height="3.9" fill="#e8eef8" stroke="#0a5fc4" stroke-width="1.1"/></svg><svg class="r" style="left:1506px;top:743.0999999999999px" width="12" height="14" viewBox="0 0 12 14"><path d="M0.7 0.7H8.4L11.3 3.6V13.3H0.7Z" fill="#fff" stroke="#1e1e1e" stroke-width="1.3"/><path d="M2 2H7.8V4.3H10V12H2Z" fill="#e3e4ea"/><path d="M8 0.4V4H11.6Z" fill="#1e1e1e"/><circle cx="5.9" cy="8.2" r="3.4" fill="none" stroke="#2e8b2e" stroke-width="1.1"/><circle cx="5.9" cy="8.2" r="1.4" fill="none" stroke="#2e8b2e" stroke-width="1.1"/><path d="M7.3 7V9.2C7.3 10 8.6 10.2 9.2 9" fill="none" stroke="#2e8b2e" stroke-width="1"/></svg><svg class="r" style="left:1495px;top:764.9px" width="6" height="8" viewBox="0 0 6 8"><path d="M1.6 3.6V2.3A1.4 1.4 0 0 1 4.4 2.3V3.6" fill="none" stroke="#0a5fc4" stroke-width="1.1"/><rect x="0.55" y="3.55" width="4.9" height="3.9" fill="#e8eef8" stroke="#0a5fc4" stroke-width="1.1"/></svg><svg class="r" style="left:1506px;top:762.0999999999999px" width="12" height="14" viewBox="0 0 12 14"><path d="M0.7 0.7H8.4L11.3 3.6V13.3H0.7Z" fill="#fff" stroke="#1e1e1e" stroke-width="1.3"/><path d="M2 2H7.8V4.3H10V12H2Z" fill="#e3e4ea"/><path d="M8 0.4V4H11.6Z" fill="#1e1e1e"/><circle cx="5.9" cy="8.2" r="3.4" fill="none" stroke="#2e8b2e" stroke-width="1.1"/><circle cx="5.9" cy="8.2" r="1.4" fill="none" stroke="#2e8b2e" stroke-width="1.1"/><path d="M7.3 7V9.2C7.3 10 8.6 10.2 9.2 9" fill="none" stroke="#2e8b2e" stroke-width="1"/></svg><svg class="r" style="left:1495px;top:783.9px" width="6" height="8" viewBox="0 0 6 8"><path d="M1.6 3.6V2.3A1.4 1.4 0 0 1 4.4 2.3V3.6" fill="none" stroke="#0a5fc4" stroke-width="1.1"/><rect x="0.55" y="3.55" width="4.9" height="3.9" fill="#e8eef8" stroke="#0a5fc4" stroke-width="1.1"/></svg><svg class="r" style="left:1506px;top:781.0999999999999px" width="12" height="14" viewBox="0 0 12 14"><path d="M0.7 0.7H8.4L11.3 3.6V13.3H0.7Z" fill="#fff" stroke="#1e1e1e" stroke-width="1.3"/><path d="M2 2H7.8V4.3H10V12H2Z" fill="#e3e4ea"/><path d="M8 0.4V4H11.6Z" fill="#1e1e1e"/><circle cx="5.9" cy="8.2" r="3.4" fill="none" stroke="#2e8b2e" stroke-width="1.1"/><circle cx="5.9" cy="8.2" r="1.4" fill="none" stroke="#2e8b2e" stroke-width="1.1"/><path d="M7.3 7V9.2C7.3 10 8.6 10.2 9.2 9" fill="none" stroke="#2e8b2e" stroke-width="1"/></svg><svg class="r" style="left:1495px;top:802.9px" width="6" height="8" viewBox="0 0 6 8"><path d="M1.6 3.6V2.3A1.4 1.4 0 0 1 4.4 2.3V3.6" fill="none" stroke="#0a5fc4" stroke-width="1.1"/><rect x="0.55" y="3.55" width="4.9" height="3.9" fill="#e8eef8" stroke="#0a5fc4" stroke-width="1.1"/></svg><svg class="r" style="left:1506px;top:800.0999999999999px" width="12" height="14" viewBox="0 0 12 14"><path d="M0.7 0.7H8.4L11.3 3.6V13.3H0.7Z" fill="#fff" stroke="#1e1e1e" stroke-width="1.3"/><path d="M2 2H7.8V4.3H10V12H2Z" fill="#e3e4ea"/><path d="M8 0.4V4H11.6Z" fill="#1e1e1e"/><circle cx="5.9" cy="8.2" r="3.4" fill="none" stroke="#2e8b2e" stroke-width="1.1"/><circle cx="5.9" cy="8.2" r="1.4" fill="none" stroke="#2e8b2e" stroke-width="1.1"/><path d="M7.3 7V9.2C7.3 10 8.6 10.2 9.2 9" fill="none" stroke="#2e8b2e" stroke-width="1"/></svg><svg class="r" style="left:1495px;top:821.9px" width="6" height="8" viewBox="0 0 6 8"><path d="M1.6 3.6V2.3A1.4 1.4 0 0 1 4.4 2.3V3.6" fill="none" stroke="#0a5fc4" stroke-width="1.1"/><rect x="0.55" y="3.55" width="4.9" height="3.9" fill="#e8eef8" stroke="#0a5fc4" stroke-width="1.1"/></svg><svg class="r" style="left:1506px;top:819.0999999999999px" width="12" height="14" viewBox="0 0 12 14"><path d="M0.7 0.7H8.4L11.3 3.6V13.3H0.7Z" fill="#fff" stroke="#1e1e1e" stroke-width="1.3"/><path d="M2 2H7.8V4.3H10V12H2Z" fill="#e3e4ea"/><path d="M8 0.4V4H11.6Z" fill="#1e1e1e"/><circle cx="5.9" cy="8.2" r="3.4" fill="none" stroke="#2e8b2e" stroke-width="1.1"/><circle cx="5.9" cy="8.2" r="1.4" fill="none" stroke="#2e8b2e" stroke-width="1.1"/><path d="M7.3 7V9.2C7.3 10 8.6 10.2 9.2 9" fill="none" stroke="#2e8b2e" stroke-width="1"/></svg><svg class="r" style="left:1495px;top:840.9px" width="6" height="8" viewBox="0 0 6 8"><path d="M1.6 3.6V2.3A1.4 1.4 0 0 1 4.4 2.3V3.6" fill="none" stroke="#0a5fc4" stroke-width="1.1"/><rect x="0.55" y="3.55" width="4.9" height="3.9" fill="#e8eef8" stroke="#0a5fc4" stroke-width="1.1"/></svg><svg class="r" style="left:1506px;top:838.0999999999999px" width="12" height="14" viewBox="0 0 12 14"><path d="M0.7 0.7H8.4L11.3 3.6V13.3H0.7Z" fill="#fff" stroke="#1e1e1e" stroke-width="1.3"/><path d="M2 2H7.8V4.3H10V12H2Z" fill="#e3e4ea"/><path d="M8 0.4V4H11.6Z" fill="#1e1e1e"/><circle cx="5.9" cy="8.2" r="3.4" fill="none" stroke="#2e8b2e" stroke-width="1.1"/><circle cx="5.9" cy="8.2" r="1.4" fill="none" stroke="#2e8b2e" stroke-width="1.1"/><path d="M7.3 7V9.2C7.3 10 8.6 10.2 9.2 9" fill="none" stroke="#2e8b2e" stroke-width="1"/></svg><svg class="r" style="left:1495px;top:859.9px" width="6" height="8" viewBox="0 0 6 8"><path d="M1.6 3.6V2.3A1.4 1.4 0 0 1 4.4 2.3V3.6" fill="none" stroke="#0a5fc4" stroke-width="1.1"/><rect x="0.55" y="3.55" width="4.9" height="3.9" fill="#e8eef8" stroke="#0a5fc4" stroke-width="1.1"/></svg><svg class="r" style="left:1506px;top:857.0999999999999px" width="12" height="14" viewBox="0 0 12 14"><path d="M0.7 0.7H8.4L11.3 3.6V13.3H0.7Z" fill="#fff" stroke="#1e1e1e" stroke-width="1.3"/><path d="M2 2H7.8V4.3H10V12H2Z" fill="#e3e4ea"/><path d="M8 0.4V4H11.6Z" fill="#1e1e1e"/><circle cx="5.9" cy="8.2" r="3.4" fill="none" stroke="#2e8b2e" stroke-width="1.1"/><circle cx="5.9" cy="8.2" r="1.4" fill="none" stroke="#2e8b2e" stroke-width="1.1"/><path d="M7.3 7V9.2C7.3 10 8.6 10.2 9.2 9" fill="none" stroke="#2e8b2e" stroke-width="1"/></svg><svg class="r" style="left:1495px;top:878.9px" width="6" height="8" viewBox="0 0 6 8"><path d="M1.6 3.6V2.3A1.4 1.4 0 0 1 4.4 2.3V3.6" fill="none" stroke="#0a5fc4" stroke-width="1.1"/><rect x="0.55" y="3.55" width="4.9" height="3.9" fill="#e8eef8" stroke="#0a5fc4" stroke-width="1.1"/></svg><svg class="r" style="left:1506px;top:876.0999999999999px" width="12" height="14" viewBox="0 0 12 14"><path d="M0.7 0.7H8.4L11.3 3.6V13.3H0.7Z" fill="#fff" stroke="#1e1e1e" stroke-width="1.3"/><path d="M2 2H7.8V4.3H10V12H2Z" fill="#e3e4ea"/><path d="M8 0.4V4H11.6Z" fill="#1e1e1e"/><circle cx="5.9" cy="8.2" r="3.4" fill="none" stroke="#2e8b2e" stroke-width="1.1"/><circle cx="5.9" cy="8.2" r="1.4" fill="none" stroke="#2e8b2e" stroke-width="1.1"/><path d="M7.3 7V9.2C7.3 10 8.6 10.2 9.2 9" fill="none" stroke="#2e8b2e" stroke-width="1"/></svg><svg class="r" style="left:1495px;top:897.9px" width="6" height="8" viewBox="0 0 6 8"><path d="M1.6 3.6V2.3A1.4 1.4 0 0 1 4.4 2.3V3.6" fill="none" stroke="#0a5fc4" stroke-width="1.1"/><rect x="0.55" y="3.55" width="4.9" height="3.9" fill="#e8eef8" stroke="#0a5fc4" stroke-width="1.1"/></svg><svg class="r" style="left:1506px;top:895.0999999999999px" width="12" height="14" viewBox="0 0 12 14"><path d="M0.7 0.7H8.4L11.3 3.6V13.3H0.7Z" fill="#fff" stroke="#1e1e1e" stroke-width="1.3"/><path d="M2 2H7.8V4.3H10V12H2Z" fill="#e3e4ea"/><path d="M8 0.4V4H11.6Z" fill="#1e1e1e"/><circle cx="5.9" cy="8.2" r="3.4" fill="none" stroke="#2e8b2e" stroke-width="1.1"/><circle cx="5.9" cy="8.2" r="1.4" fill="none" stroke="#2e8b2e" stroke-width="1.1"/><path d="M7.3 7V9.2C7.3 10 8.6 10.2 9.2 9" fill="none" stroke="#2e8b2e" stroke-width="1"/></svg><svg class="r" style="left:1495px;top:916.9px" width="6" height="8" viewBox="0 0 6 8"><path d="M1.6 3.6V2.3A1.4 1.4 0 0 1 4.4 2.3V3.6" fill="none" stroke="#0a5fc4" stroke-width="1.1"/><rect x="0.55" y="3.55" width="4.9" height="3.9" fill="#e8eef8" stroke="#0a5fc4" stroke-width="1.1"/></svg><svg class="r" style="left:1506px;top:914.0999999999999px" width="12" height="14" viewBox="0 0 12 14"><path d="M0.7 0.7H8.4L11.3 3.6V13.3H0.7Z" fill="#fff" stroke="#1e1e1e" stroke-width="1.3"/><path d="M2 2H7.8V4.3H10V12H2Z" fill="#e3e4ea"/><path d="M8 0.4V4H11.6Z" fill="#1e1e1e"/><circle cx="5.9" cy="8.2" r="3.4" fill="none" stroke="#2e8b2e" stroke-width="1.1"/><circle cx="5.9" cy="8.2" r="1.4" fill="none" stroke="#2e8b2e" stroke-width="1.1"/><path d="M7.3 7V9.2C7.3 10 8.6 10.2 9.2 9" fill="none" stroke="#2e8b2e" stroke-width="1"/></svg><svg class="r" style="left:1495px;top:935.9px" width="6" height="8" viewBox="0 0 6 8"><path d="M1.6 3.6V2.3A1.4 1.4 0 0 1 4.4 2.3V3.6" fill="none" stroke="#0a5fc4" stroke-width="1.1"/><rect x="0.55" y="3.55" width="4.9" height="3.9" fill="#e8eef8" stroke="#0a5fc4" stroke-width="1.1"/></svg><svg class="r" style="left:1506px;top:933.0999999999999px" width="12" height="14" viewBox="0 0 12 14"><path d="M0.7 0.7H8.4L11.3 3.6V13.3H0.7Z" fill="#fff" stroke="#1e1e1e" stroke-width="1.3"/><path d="M2 2H7.8V4.3H10V12H2Z" fill="#e3e4ea"/><path d="M8 0.4V4H11.6Z" fill="#1e1e1e"/><circle cx="5.9" cy="8.2" r="3.4" fill="none" stroke="#2e8b2e" stroke-width="1.1"/><circle cx="5.9" cy="8.2" r="1.4" fill="none" stroke="#2e8b2e" stroke-width="1.1"/><path d="M7.3 7V9.2C7.3 10 8.6 10.2 9.2 9" fill="none" stroke="#2e8b2e" stroke-width="1"/></svg><svg class="r" style="left:1495px;top:954.9px" width="6" height="8" viewBox="0 0 6 8"><path d="M1.6 3.6V2.3A1.4 1.4 0 0 1 4.4 2.3V3.6" fill="none" stroke="#0a5fc4" stroke-width="1.1"/><rect x="0.55" y="3.55" width="4.9" height="3.9" fill="#e8eef8" stroke="#0a5fc4" stroke-width="1.1"/></svg><svg class="r" style="left:1506px;top:952.0999999999999px" width="12" height="14" viewBox="0 0 12 14"><path d="M0.7 0.7H8.4L11.3 3.6V13.3H0.7Z" fill="#fff" stroke="#1e1e1e" stroke-width="1.3"/><path d="M2 2H7.8V4.3H10V12H2Z" fill="#e3e4ea"/><path d="M8 0.4V4H11.6Z" fill="#1e1e1e"/><circle cx="5.9" cy="8.2" r="3.4" fill="none" stroke="#2e8b2e" stroke-width="1.1"/><circle cx="5.9" cy="8.2" r="1.4" fill="none" stroke="#2e8b2e" stroke-width="1.1"/><path d="M7.3 7V9.2C7.3 10 8.6 10.2 9.2 9" fill="none" stroke="#2e8b2e" stroke-width="1"/></svg><svg class="r" style="left:1495px;top:973.9px" width="6" height="8" viewBox="0 0 6 8"><path d="M1.6 3.6V2.3A1.4 1.4 0 0 1 4.4 2.3V3.6" fill="none" stroke="#0a5fc4" stroke-width="1.1"/><rect x="0.55" y="3.55" width="4.9" height="3.9" fill="#e8eef8" stroke="#0a5fc4" stroke-width="1.1"/></svg><svg class="r" style="left:1506px;top:971.0999999999999px" width="12" height="14" viewBox="0 0 12 14"><path d="M0.7 0.7H8.4L11.3 3.6V13.3H0.7Z" fill="#fff" stroke="#1e1e1e" stroke-width="1.3"/><path d="M2 2H7.8V4.3H10V12H2Z" fill="#e3e4ea"/><path d="M8 0.4V4H11.6Z" fill="#1e1e1e"/><circle cx="5.9" cy="8.2" r="3.4" fill="none" stroke="#2e8b2e" stroke-width="1.1"/><circle cx="5.9" cy="8.2" r="1.4" fill="none" stroke="#2e8b2e" stroke-width="1.1"/><path d="M7.3 7V9.2C7.3 10 8.6 10.2 9.2 9" fill="none" stroke="#2e8b2e" stroke-width="1"/></svg><svg class="r" style="left:1495px;top:992.9px" width="6" height="8" viewBox="0 0 6 8"><path d="M1.6 3.6V2.3A1.4 1.4 0 0 1 4.4 2.3V3.6" fill="none" stroke="#0a5fc4" stroke-width="1.1"/><rect x="0.55" y="3.55" width="4.9" height="3.9" fill="#e8eef8" stroke="#0a5fc4" stroke-width="1.1"/></svg><svg class="r" style="left:1506px;top:990.0999999999999px" width="12" height="14" viewBox="0 0 12 14"><path d="M0.7 0.7H8.4L11.3 3.6V13.3H0.7Z" fill="#fff" stroke="#1e1e1e" stroke-width="1.3"/><path d="M2 2H7.8V4.3H10V12H2Z" fill="#e3e4ea"/><path d="M8 0.4V4H11.6Z" fill="#1e1e1e"/><circle cx="5.9" cy="8.2" r="3.4" fill="none" stroke="#2e8b2e" stroke-width="1.1"/><circle cx="5.9" cy="8.2" r="1.4" fill="none" stroke="#2e8b2e" stroke-width="1.1"/><path d="M7.3 7V9.2C7.3 10 8.6 10.2 9.2 9" fill="none" stroke="#2e8b2e" stroke-width="1"/></svg><div class="r" style="left:1436px;top:1004px;width:100px;height:20px;background:#f6f8fc;"></div><div class="r" style="left:1538px;top:1004px;width:74px;height:19px;background:#3f5590;"></div><div class="r" style="left:1614px;top:1004px;width:63px;height:19px;background:#3f5590;"></div><div class="r" style="left:1914px;top:97px;width:6px;height:86px;background:#445285;"></div><div class="r" style="left:1896px;top:98px;width:14px;height:90px"><div style="position:absolute;left:0;top:0;transform-origin:0 0;transform:translate(13px,-0.5px) rotate(90deg) scaleX(0.975);font:12px 'Liberation Sans',sans-serif;color:#f0f3fb;white-space:pre;line-height:12px">Diagnostic Tools</div></div><div class="r" style="left:7px;top:1009px;width:60px;height:15px;box-sizing:border-box;border:1px solid #8f97ad;background:#fff"></div><svg class="r" style="left:57px;top:1015px" width="7" height="4"><path d="M0 0H7L3.5 4Z" fill="#1e1e1e"/></svg><svg class="r" style="left:90px;top:1010px" width="13" height="13" viewBox="0 0 13 13"><circle cx="6.5" cy="6.5" r="6" fill="#1f8a3b"/><path d="M3.5 6.8L5.6 8.8L9.5 4.6" fill="none" stroke="#fff" stroke-width="1.6"/></svg><svg class="r" style="left:267px;top:1012px" width="6" height="9"><path d="M6 0V9L0 4.5Z" fill="#868999"/></svg><div class="r" style="left:278px;top:1013px;width:670px;height:7px;background:#c2c3c9;"></div><svg class="r" style="left:1221px;top:1012px" width="6" height="9"><path d="M0 0V9L6 4.5Z" fill="#868999"/></svg><svg class="r" style="left:1414px;top:146px" width="9" height="5"><path d="M0 5H9L4.5 0Z" fill="#868999"/></svg><svg class="r" style="left:1414px;top:998px" width="9" height="5"><path d="M0 0H9L4.5 5Z" fill="#868999"/></svg><svg class="r" style="left:1876px;top:175px" width="9" height="5"><path d="M0 5H9L4.5 0Z" fill="#868999"/></svg><svg class="r" style="left:1876px;top:992px" width="9" height="5"><path d="M0 0H9L4.5 5Z" fill="#868999"/></svg><svg class="r" style="left:1412px;top:122px" width="13" height="15" viewBox="0 0 13 15"><path d="M1 6.5H12M1 9.5H12M6.5 1V5M6.5 11V14" stroke="#1e1e1e" stroke-width="1"/><path d="M4 3.5L6.5 1L9 3.5M4 11.5L6.5 14L9 11.5" fill="none" stroke="#1e1e1e" stroke-width="1"/></svg><div class="r" style="left:6px;top:1050px;width:51px;height:6px;background:#44548a;"></div><div class="r" style="left:69px;top:1050px;width:62px;height:6px;background:#44548a;"></div><div class="r" style="left:143px;top:1050px;width:97px;height:6px;background:#44548a;"></div><div class="r" style="left:252px;top:1050px;width:104px;height:6px;background:#44548a;"></div><div class="r" style="left:368px;top:1050px;width:104px;height:6px;background:#44548a;"></div><div class="r" style="left:484px;top:1050px;width:38px;height:6px;background:#44548a;"></div><div class="r" style="left:534px;top:1050px;width:58px;height:6px;background:#44548a;"></div><div class="r" style="left:604px;top:1050px;width:31px;height:6px;background:#44548a;"></div><div class="r" style="left:647px;top:1050px;width:33px;height:6px;background:#44548a;"></div><div class="r" style="left:692px;top:1050px;width:43px;height:6px;background:#44548a;"></div><div class="r" style="left:747px;top:1050px;width:114px;height:6px;background:#44548a;"></div><div class="r" style="left:873px;top:1050px;width:71px;height:6px;background:#44548a;"></div><svg class="r" style="left:4px;top:1059px" width="17" height="17" viewBox="0 0 17 17"><path d="M0.7 1.2H15.3V13.3H11L8 16L5 13.3H0.7Z" fill="none" stroke="#fff" stroke-width="1.1"/><path d="M3 4.5H8.5M3 7.5H8.5" stroke="#fff" stroke-width="1"/><path d="M10.5 4.5L11.7 5.7L14 3" fill="none" stroke="#e8c8c0" stroke-width="0.9"/></svg><svg class="r" style="left:1555px;top:1065px" width="8" height="5"><path d="M0 5H8L4 0Z" fill="#fff"/></svg><svg class="r" style="left:1702px;top:1065px" width="8" height="5"><path d="M0 5H8L4 0Z" fill="#fff"/></svg><svg class="r" style="left:1862px;top:1065px" width="8" height="5"><path d="M0 5H8L4 0Z" fill="#fff"/></svg><svg class="r" style="left:1503px;top:1060px" width="15" height="15" viewBox="0 0 15 15"><path d="M4 14V1.5M1.5 4L4 1.5L6.5 4M11 1V13.5M8.5 11L11 13.5L13.5 11" fill="none" stroke="#fff" stroke-width="1.2"/></svg><svg class="r" style="left:1585px;top:1060px" width="14" height="14" viewBox="0 0 14 14"><path d="M1.5 12.5L2.5 9L10 1.5L12.5 4L5 11.5Z" fill="none" stroke="#fff" stroke-width="1.1"/></svg><svg class="r" style="left:1635px;top:1059px" width="17" height="17" viewBox="0 0 17 17"><circle cx="4" cy="3" r="2" fill="none" stroke="#fff"/><circle cx="4" cy="14" r="2" fill="none" stroke="#fff"/><path d="M4 5V12M4 7C4 10 10 8 10 10" fill="none" stroke="#fff"/><circle cx="12" cy="12" r="4" fill="#fff"/><path d="M12 14.5V9.5M10 11.5L12 9.5L14 11.5" fill="none" stroke="#a14b42" stroke-width="1.1"/></svg><svg class="r" style="left:1734px;top:1059px" width="17" height="17" viewBox="0 0 17 17"><path d="M1.5 3.5H14.5M2.5 3.5V15.5H8M13.5 3.5V8M1.5 1.5H14.5" fill="none" stroke="#fff" stroke-width="1.1"/><path d="M5 6V12M8 6V9" stroke="#fff"/><circle cx="12" cy="13" r="4" fill="#fff"/><path d="M12 15.5V10.5M10 12.5L12 10.5L14 12.5" fill="none" stroke="#1e1e1e" stroke-width="1.1"/></svg><svg class="r" style="left:1887px;top:1058px" width="22" height="20" viewBox="0 0 22 20"><path d="M3 13.5H15M4.5 13.5V7A4.5 4.5 0 0 1 13.5 7V13.5M7.5 15.5A1.8 1.8 0 0 0 10.5 15.5" fill="none" stroke="#fff" stroke-width="1.1"/><circle cx="15" cy="14" r="5" fill="#fff"/><text x="15" y="17.5" font-family="Liberation Sans" font-size="9" text-anchor="middle" fill="#1e1e1e">1</text></svg><svg class="r" style="left:1746px;top:6px" width="21" height="21"><circle cx="10.5" cy="10.5" r="10" fill="#1177d6"/><text x="10.5" y="14.5" font-family="Liberation Sans" font-size="11" text-anchor="middle" fill="#fff">VE</text></svg><div class="r" style="left:1800px;top:16px;width:11px;height:1px;background:#3b4670;"></div><svg class="r" style="left:1845px;top:11px" width="12" height="11"><path d="M0.5 2.5H8.5V10.5H0.5Z M2.5 2.5V0.5H10.5V8.5H8.5" fill="none" stroke="#3b4670"/></svg><svg class="r" style="left:1891px;top:11px" width="12" height="12"><path d="M0.5 0.5L11.5 11.5M11.5 0.5L0.5 11.5" stroke="#3b4670" stroke-width="0.9"/></svg><svg class="r" style="left:12px;top:6px" width="21" height="21" viewBox="0 0 21 21"><path d="M0 5L4 1.5L9 5.5L14.5 0.5L20 2.5V15L16 15V8L12 11L9 8.5L4 12V17L0 15Z" fill="#8a4fd0"/><rect x="5.5" y="11.5" width="15" height="8.5" rx="1" fill="#cdd5f0" stroke="#8a4fd0" stroke-width="1.3"/><text x="13" y="18.5" font-family="Liberation Sans" font-weight="bold" font-size="6.5" text-anchor="middle" fill="#8a4fd0">PRE</text></svg><svg class="r" style="left:706px;top:9px" width="13" height="13"><circle cx="8" cy="5" r="4" fill="none" stroke="#1e1e1e" stroke-width="1.2"/><path d="M5.2 7.8L1 12" stroke="#1e1e1e" stroke-width="1.3"/></svg><svg class="r" style="left:766px;top:15px" width="6" height="4"><path d="M0 0H6L3 3.5Z" fill="#1e1e1e"/></svg><svg class="r" style="left:12px;top:36px" width="4" height="20" fill="#5c6480"><rect x="0" y="0" width="1" height="1"/><rect x="2" y="0" width="1" height="1"/><rect x="1" y="2" width="1" height="1"/><rect x="3" y="2" width="1" height="1"/><rect x="0" y="4" width="1" height="1"/><rect x="2" y="4" width="1" height="1"/><rect x="1" y="6" width="1" height="1"/><rect x="3" y="6" width="1" height="1"/><rect x="0" y="8" width="1" height="1"/><rect x="2" y="8" width="1" height="1"/><rect x="1" y="10" width="1" height="1"/><rect x="3" y="10" width="1" height="1"/><rect x="0" y="12" width="1" height="1"/><rect x="2" y="12" width="1" height="1"/><rect x="1" y="14" width="1" height="1"/><rect x="3" y="14" width="1" height="1"/><rect x="0" y="16" width="1" height="1"/><rect x="2" y="16" width="1" height="1"/><rect x="1" y="18" width="1" height="1"/><rect x="3" y="18" width="1" height="1"/></svg><svg class="r" style="left:24px;top:38px" width="14" height="14"><circle cx="7" cy="7" r="6.2" fill="none" stroke="#1e6fcf" stroke-width="1.3"/><path d="M10.5 7H3.8M6.5 4.2L3.8 7L6.5 9.8" fill="none" stroke="#1e6fcf" stroke-width="1.3"/></svg><svg class="r" style="left:46px;top:45px" width="6" height="4"><path d="M0 0H6L3 3.5Z" fill="#1e1e1e"/></svg><svg class="r" style="left:59px;top:38px" width="14" height="14"><circle cx="7" cy="7" r="6.2" fill="none" stroke="#a9b0c8" stroke-width="1.1"/><path d="M3.5 7H10.2M7.5 4.2L10.2 7L7.5 9.8" fill="none" stroke="#a9b0c8" stroke-width="1.1"/></svg><div class="r" style="left:80px;top:37px;width:1px;height:19px;background:#8e98b8;"></div><svg class="r" style="left:89px;top:38px" width="16" height="16"><path d="M3.5 5.5H10.5V14.5H3.5Z M6.5 2.5H13.5V11.5" fill="none" stroke="#a9b0c8"/></svg><svg class="r" style="left:111px;top:45px" width="6" height="4"><path d="M0 0H6L3 3.5Z" fill="#a9b0c8"/></svg><svg class="r" style="left:123px;top:38px" width="16" height="15"><path d="M1 6H5L6 7H12V14H1Z" fill="#b68f3f"/><path d="M3 9H15L12 14H1Z" fill="#d0a85a"/><path d="M9 5C9 2.5 11 2 14 2M12 0.5L14 2L12 3.5" fill="none" stroke="#1e6fcf" stroke-width="1.1"/></svg><svg class="r" style="left:145px;top:38px" width="15" height="15"><path d="M0.7 0.7H11.5L14.3 3.5V14.3H0.7Z" fill="none" stroke="#1e6fcf" stroke-width="1.3"/><path d="M3.5 1V5H10.5V1M3 14V9H12V14" fill="none" stroke="#1e6fcf" stroke-width="1.3"/></svg><svg class="r" style="left:167px;top:38px" width="16" height="16"><path d="M2.5 0.7H15.3V13" fill="none" stroke="#1e6fcf" stroke-width="1.1"/><path d="M0.7 2.7H11.5L13.3 4.5V15.3H0.7Z" fill="none" stroke="#1e6fcf" stroke-width="1.3"/><path d="M3.5 3V6.5H9.5V3M3 15V10.5H11V15" fill="none" stroke="#1e6fcf" stroke-width="1.2"/></svg><div class="r" style="left:189px;top:37px;width:1px;height:19px;background:#8e98b8;"></div><svg class="r" style="left:197px;top:38px" width="15" height="15"><path d="M2 1.5V6.5H7" fill="none" stroke="#1e1e1e" stroke-width="1.2"/><path d="M2.5 6A5.5 5.5 0 1 1 8 13.5" fill="none" stroke="#1e1e1e" stroke-width="1.2"/></svg><svg class="r" style="left:220px;top:45px" width="6" height="4"><path d="M0 0H6L3 3.5Z" fill="#1e1e1e"/></svg><svg class="r" style="left:233px;top:38px" width="15" height="15"><path d="M13 1.5V6.5H8" fill="none" stroke="#a9b0c8" stroke-width="1.2"/><path d="M12.5 6A5.5 5.5 0 1 0 7 13.5" fill="none" stroke="#a9b0c8" stroke-width="1.2"/></svg><svg class="r" style="left:255px;top:45px" width="6" height="4"><path d="M0 0H6L3 3.5Z" fill="#a9b0c8"/></svg><div class="r" style="left:268px;top:37px;width:1px;height:19px;background:#8e98b8;"></div><div class="r" style="left:275px;top:35px;width:65px;height:22px;box-sizing:border-box;border:1px solid #a9adb9;background:#e1e6f4"></div><svg class="r" style="left:329px;top:44px" width="6" height="4"><path d="M0 0H6L3 3.5Z" fill="#a0a0a0"/></svg><div class="r" style="left:346px;top:35px;width:110px;height:22px;box-sizing:border-box;border:1px solid #a9adb9;background:#e1e6f4"></div><svg class="r" style="left:445px;top:44px" width="6" height="4"><path d="M0 0H6L3 3.5Z" fill="#a0a0a0"/></svg><div class="r" style="left:462px;top:35px;width:200px;height:22px;box-sizing:border-box;border:1px solid #a9adb9;background:#e1e6f4"></div><svg class="r" style="left:651px;top:44px" width="6" height="4"><path d="M0 0H6L3 3.5Z" fill="#a0a0a0"/></svg><svg class="r" style="left:671px;top:39px" width="11" height="13"><path d="M0 0V13L10.5 6.5Z" fill="#a3abc4"/></svg><svg class="r" style="left:745px;top:45px" width="6" height="4"><path d="M0 0H6L3 3.5Z" fill="#767676"/></svg><svg class="r" style="left:759px;top:37px" width="15" height="17" viewBox="0 0 15 17"><path d="M7 16.5C3 16.5 0.5 14 0.8 10.5C1 7.5 3 6.5 4 4C4.5 6 5.5 6.5 6 7C6.5 4 8.5 1.5 12.5 0.5C10.5 2.5 10.5 4.5 12 6.5C13.5 8.5 14.5 10 14 12.5C13.5 15 11 16.5 7 16.5Z" fill="#d9363e"/><path d="M7.5 15C5.5 15 4 13.5 4.5 11.5C5 10 6 9.5 6.5 8C8 10 10.5 10.5 10.5 12.5C10.5 14 9.5 15 7.5 15Z" fill="#f08c8c"/></svg><svg class="r" style="left:779px;top:45px" width="6" height="4"><path d="M0 0H6L3 3.5Z" fill="#1e1e1e"/></svg><svg class="r" style="left:793px;top:38px" width="15" height="15"><path d="M4 2.2A6 6 0 1 0 9 1.5" fill="none" stroke="#1e6fcf" stroke-width="1.3"/><path d="M3 0.5V3.5H6" fill="none" stroke="#1e6fcf" stroke-width="1.3"/></svg><svg class="r" style="left:815px;top:45px" width="6" height="4"><path d="M0 0H6L3 3.5Z" fill="#1e1e1e"/></svg><div class="r" style="left:826px;top:37px;width:1px;height:19px;background:#8e98b8;"></div><svg class="r" style="left:835px;top:38px" width="16" height="15"><path d="M0.5 1.5H5L6.5 3H13.5V11.5H0.5Z" fill="#c9a96a" stroke="#8a6a2a"/><circle cx="11.5" cy="10" r="2.5" fill="#cdd5f0" stroke="#1e6fcf" stroke-width="1.2"/><path d="M9.5 12L7.5 14.5" stroke="#1e6fcf" stroke-width="1.3"/></svg><div class="r" style="left:856px;top:37px;width:1px;height:19px;background:#8e98b8;"></div><svg class="r" style="left:865px;top:38px" width="15" height="15"><path d="M0.7 0.7H14.3V12.3H8" fill="none" stroke="#1e1e1e" stroke-width="1.2"/><path d="M0.7 0.7V8M0.7 3.5H14.3" fill="none" stroke="#1e1e1e" stroke-width="1.2"/><path d="M1 11L4 8.5L7 11V14.5H1Z" fill="#fff" stroke="#1e6fcf" stroke-width="1.1"/></svg><svg class="r" style="left:886px;top:48px" width="7" height="7"><path d="M0 0.5H7" stroke="#1e1e1e"/><path d="M0 3H7L3.5 6.5Z" fill="#1e1e1e"/></svg><svg class="r" style="left:898px;top:37px" width="4" height="18" fill="#5c6480"><rect x="0" y="0" width="1" height="1"/><rect x="2" y="0" width="1" height="1"/><rect x="1" y="2" width="1" height="1"/><rect x="3" y="2" width="1" height="1"/><rect x="0" y="4" width="1" height="1"/><rect x="2" y="4" width="1" height="1"/><rect x="1" y="6" width="1" height="1"/><rect x="3" y="6" width="1" height="1"/><rect x="0" y="8" width="1" height="1"/><rect x="2" y="8" width="1" height="1"/><rect x="1" y="10" width="1" height="1"/><rect x="3" y="10" width="1" height="1"/><rect x="0" y="12" width="1" height="1"/><rect x="2" y="12" width="1" height="1"/><rect x="1" y="14" width="1" height="1"/><rect x="3" y="14" width="1" height="1"/><rect x="0" y="16" width="1" height="1"/><rect x="2" y="16" width="1" height="1"/></svg><div class="r" style="left:912px;top:41px;width:3px;height:10px;background:#1e1e1e;"></div><div class="r" style="left:918px;top:41px;width:3px;height:10px;background:#1e1e1e;"></div><div class="r" style="left:934px;top:41px;width:10px;height:10px;background:#d13438;"></div><svg class="r" style="left:953px;top:38px" width="15" height="15"><path d="M11 2.2A6 6 0 1 1 6 1.5" fill="none" stroke="#1e6fcf" stroke-width="1.3"/><path d="M12 0.5V3.5H9" fill="none" stroke="#1e6fcf" stroke-width="1.3"/></svg><div class="r" style="left:975px;top:37px;width:1px;height:19px;background:#8e98b8;"></div><svg class="r" style="left:985px;top:39px" width="14" height="12"><path d="M0 6H13M8 1L13 6L8 11" fill="none" stroke="#a3abc4" stroke-width="1.1"/></svg><svg class="r" style="left:1007px;top:38px" width="11" height="15"><path d="M5.5 0V9M2 6L5.5 9.5L9 6" fill="none" stroke="#a3abc4" stroke-width="1.1"/><circle cx="5.5" cy="13" r="1.5" fill="#a3abc4"/></svg><svg class="r" style="left:1028px;top:38px" width="14" height="15"><path d="M1 8A6 6 0 0 1 13 6M13 2V6.5H8.5" fill="none" stroke="#a3abc4" stroke-width="1.1"/><circle cx="6.5" cy="13" r="1.5" fill="#a3abc4"/></svg><svg class="r" style="left:1051px;top:38px" width="11" height="15"><path d="M5.5 10V1M2 4L5.5 0.5L9 4" fill="none" stroke="#a3abc4" stroke-width="1.1"/><circle cx="5.5" cy="13" r="1.5" fill="#a3abc4"/></svg><div class="r" style="left:1071px;top:37px;width:1px;height:19px;background:#8e98b8;"></div><svg class="r" style="left:1079px;top:39px" width="15" height="13"><path d="M1 11C5 1 10 12 14 2" fill="none" stroke="#1e6fcf" stroke-width="1.3"/><path d="M1 2C5 12 10 1 14 11" fill="none" stroke="#8a4fd0" stroke-width="1.3"/></svg><svg class="r" style="left:1101px;top:48px" width="7" height="7"><path d="M0 0.5H7" stroke="#1e1e1e"/><path d="M0 3H7L3.5 6.5Z" fill="#1e1e1e"/></svg><svg class="r" style="left:1113px;top:37px" width="4" height="18" fill="#5c6480"><rect x="0" y="0" width="1" height="1"/><rect x="2" y="0" width="1" height="1"/><rect x="1" y="2" width="1" height="1"/><rect x="3" y="2" width="1" height="1"/><rect x="0" y="4" width="1" height="1"/><rect x="2" y="4" width="1" height="1"/><rect x="1" y="6" width="1" height="1"/><rect x="3" y="6" width="1" height="1"/><rect x="0" y="8" width="1" height="1"/><rect x="2" y="8" width="1" height="1"/><rect x="1" y="10" width="1" height="1"/><rect x="3" y="10" width="1" height="1"/><rect x="0" y="12" width="1" height="1"/><rect x="2" y="12" width="1" height="1"/><rect x="1" y="14" width="1" height="1"/><rect x="3" y="14" width="1" height="1"/><rect x="0" y="16" width="1" height="1"/><rect x="2" y="16" width="1" height="1"/></svg><div class="r" style="left:1121px;top:34px;width:22px;height:24px;box-sizing:border-box;border:1px solid #b38622;background:#fbe7b5"></div><svg class="r" style="left:1123px;top:38px" width="18" height="16"><text x="9" y="8" font-family="Liberation Sans" font-size="8.5" text-anchor="middle" fill="#1e1e1e">abc</text><path d="M5 10.5L8 13.5L13 9" fill="none" stroke="#2c8a2c" stroke-width="1.3"/></svg><div class="r" style="left:1146px;top:37px;width:1px;height:19px;background:#8e98b8;"></div><svg class="r" style="left:1155px;top:38px" width="16" height="15"><path d="M1 0V9L3 7L5 10L6 9.5L4.5 6.5H7Z" fill="#1e6fcf"/><path d="M4.5 10.5H15M5.5 11.5H15V14.5H5.5Z" fill="none" stroke="#1e1e1e" stroke-width="1.1"/></svg><svg class="r" style="left:1177px;top:38px" width="16" height="15"><path d="M3 4H1V14H3M1 4C2 4 2 1.5 5 1.5M3.5 0L5.5 1.5L3.5 3" fill="none" stroke="#1e6fcf" stroke-width="1.1"/><path d="M6.5 1.5H11L13 3.5V14H6.5ZM8 5H12M8 7.5H12M8 10H12M8 12.5H12" fill="none" stroke="#1e1e1e" stroke-width="1"/></svg><div class="r" style="left:1198px;top:37px;width:1px;height:19px;background:#8e98b8;"></div><svg class="r" style="left:1207px;top:39px" width="14" height="13"><path d="M0 1H4" stroke="#1e1e1e"/><path d="M5 3.5H13M5 6H13M5 8.5H13" stroke="#2c8a2c"/><path d="M4 11H13" stroke="#1e1e1e"/></svg><svg class="r" style="left:1228px;top:38px" width="16" height="15"><path d="M1 1V5H5M1.5 4.5C3 1 7 1 7 4.5C7 7 5 8 4 8.5" fill="none" stroke="#1e6fcf" stroke-width="1.1"/><path d="M8 5H15M8 7.5H15M8 10H15M6 12.5H15" stroke="#1e1e1e"/></svg><div class="r" style="left:1250px;top:37px;width:1px;height:19px;background:#8e98b8;"></div><svg class="r" style="left:1261px;top:39px" width="11" height="14"><path d="M0.7 0.7H10.3V13L5.5 9L0.7 13Z" fill="#b9c2dc" stroke="#1e1e1e" stroke-width="1.3"/></svg><svg class="r" style="left:1281px;top:39px" width="14" height="14"><path d="M3.5 0.7H13.3V13L8.5 9L3.5 13V7" fill="none" stroke="#a3abc4" stroke-width="1.1"/><path d="M0 5H6M3 2.5L0.5 5L3 7.5" fill="none" stroke="#a3abc4" stroke-width="1"/></svg><svg class="r" style="left:1302px;top:39px" width="14" height="14"><path d="M3.5 0.7H13.3V13L8.5 9L3.5 13V7" fill="none" stroke="#a3abc4" stroke-width="1.1"/><path d="M0 5H6M3 2.5L0.5 5L3 7.5" fill="none" stroke="#a3abc4" stroke-width="1"/></svg><svg class="r" style="left:1324px;top:39px" width="14" height="14"><path d="M3.5 0.7H13.3V13L8.5 9L3.5 13V7" fill="none" stroke="#a3abc4" stroke-width="1.1"/><path d="M0 5H6M3 2.5L0.5 5L3 7.5" fill="none" stroke="#a3abc4" stroke-width="1"/></svg><svg class="r" style="left:1347px;top:48px" width="7" height="7"><path d="M0 0.5H7" stroke="#1e1e1e"/><path d="M0 3H7L3.5 6.5Z" fill="#1e1e1e"/></svg><svg class="r" style="left:1358px;top:37px" width="4" height="18" fill="#5c6480"><rect x="0" y="0" width="1" height="1"/><rect x="2" y="0" width="1" height="1"/><rect x="1" y="2" width="1" height="1"/><rect x="3" y="2" width="1" height="1"/><rect x="0" y="4" width="1" height="1"/><rect x="2" y="4" width="1" height="1"/><rect x="1" y="6" width="1" height="1"/><rect x="3" y="6" width="1" height="1"/><rect x="0" y="8" width="1" height="1"/><rect x="2" y="8" width="1" height="1"/><rect x="1" y="10" width="1" height="1"/><rect x="3" y="10" width="1" height="1"/><rect x="0" y="12" width="1" height="1"/><rect x="2" y="12" width="1" height="1"/><rect x="1" y="14" width="1" height="1"/><rect x="3" y="14" width="1" height="1"/><rect x="0" y="16" width="1" height="1"/><rect x="2" y="16" width="1" height="1"/></svg><svg class="r" style="left:1371px;top:38px" width="13" height="16"><path d="M4 12.5V10C2 9 1 7.5 1 5.5A5.5 5.5 0 0 1 12 5.5C12 7.5 11 9 9 10V12.5Z" fill="none" stroke="#8a4fd0" stroke-width="1.3"/><path d="M4.5 14.5H8.5M4.5 6.5L6.5 9L8.5 6.5M6.5 9V12" fill="none" stroke="#8a4fd0" stroke-width="1.1"/></svg><svg class="r" style="left:1501px;top:45px" width="6" height="4"><path d="M0 0H6L3 3.5Z" fill="#1e1e1e"/></svg><svg class="r" style="left:1514px;top:48px" width="7" height="7"><path d="M0 0.5H7" stroke="#1e1e1e"/><path d="M0 3H7L3.5 6.5Z" fill="#1e1e1e"/></svg><svg class="r" style="left:1805px;top:38px" width="16" height="16"><circle cx="6" cy="7.5" r="3" fill="none" stroke="#1e1e1e" stroke-width="1.1"/><path d="M0.8 15A5.5 5.5 0 0 1 11.2 15" fill="none" stroke="#1e1e1e" stroke-width="1.1"/><path d="M5 3.5V0.7H15.3V8.5H11.5L10 10" fill="none" stroke="#1e1e1e" stroke-width="1.1"/></svg><div class="r" style="left:1833px;top:34px;width:73px;height:25px;background:#5d6b99;"></div><svg class="r" style="left:12px;top:62px" width="4" height="20" fill="#5c6480"><rect x="0" y="0" width="1" height="1"/><rect x="2" y="0" width="1" height="1"/><rect x="1" y="2" width="1" height="1"/><rect x="3" y="2" width="1" height="1"/><rect x="0" y="4" width="1" height="1"/><rect x="2" y="4" width="1" height="1"/><rect x="1" y="6" width="1" height="1"/><rect x="3" y="6" width="1" height="1"/><rect x="0" y="8" width="1" height="1"/><rect x="2" y="8" width="1" height="1"/><rect x="1" y="10" width="1" height="1"/><rect x="3" y="10" width="1" height="1"/><rect x="0" y="12" width="1" height="1"/><rect x="2" y="12" width="1" height="1"/><rect x="1" y="14" width="1" height="1"/><rect x="3" y="14" width="1" height="1"/><rect x="0" y="16" width="1" height="1"/><rect x="2" y="16" width="1" height="1"/><rect x="1" y="18" width="1" height="1"/><rect x="3" y="18" width="1" height="1"/></svg><div class="r" style="left:72px;top:61px;width:201px;height:22px;box-sizing:border-box;border:1px solid #8f97ad;background:#ffffff"></div><svg class="r" style="left:262px;top:70px" width="6" height="4"><path d="M0 0H6L3 3.5Z" fill="#1e1e1e"/></svg><svg class="r" style="left:280px;top:65px" width="15" height="15"><path d="M0.5 0.5H13.5V13.5H0.5ZM0.5 3.5H13.5" fill="none" stroke="#a3abc4"/><path d="M8 5L5.5 9H8L6.5 12.5" fill="none" stroke="#a3abc4"/></svg><svg class="r" style="left:389px;top:71px" width="6" height="4"><path d="M0 0H6L3 3.5Z" fill="#767676"/></svg><div class="r" style="left:445px;top:61px;width:200px;height:22px;box-sizing:border-box;border:1px solid #a9adb9;background:#e1e6f4"></div><svg class="r" style="left:634px;top:70px" width="6" height="4"><path d="M0 0H6L3 3.5Z" fill="#a0a0a0"/></svg><svg class="r" style="left:653px;top:64px" width="13" height="14"><path d="M1 0V14M1 1H6V3H12V9H6V7H1" fill="none" stroke="#a3abc4" stroke-width="1.1"/></svg><svg class="r" style="left:674px;top:64px" width="15" height="14"><path d="M1 5V14M1 5.5H6V12H1M7 0.5V9M7 1H13V7.5H7" fill="none" stroke="#a3abc4" stroke-width="1.1"/></svg><svg class="r" style="left:696px;top:66px" width="15" height="10"><path d="M1 1L3 5L1 9M3 5C6 0 11 0 14 5C11 10 6 10 3 5" fill="none" stroke="#a3abc4" stroke-width="1.1"/></svg><div class="r" style="left:790px;top:61px;width:239px;height:22px;box-sizing:border-box;border:1px solid #a9adb9;background:#e1e6f4"></div><svg class="r" style="left:1018px;top:70px" width="6" height="4"><path d="M0 0H6L3 3.5Z" fill="#a0a0a0"/></svg><svg class="r" style="left:1037px;top:74px" width="7" height="7"><path d="M0 0.5H7" stroke="#1e1e1e"/><path d="M0 3H7L3.5 6.5Z" fill="#1e1e1e"/></svg><svg class="r" style="left:1399px;top:105px" width="9" height="5"><path d="M0 0H9L4.5 5Z" fill="#e6ebfa"/></svg><svg class="r" style="left:1416px;top:101px" width="12" height="12" viewBox="0 0 12 12"><path d="M6 0.5L7 2L8.7 1.3L9 3L10.7 3.3L10 5L11.5 6L10 7L10.7 8.7L9 9L8.7 10.7L7 10L6 11.5L5 10L3.3 10.7L3 9L1.3 8.7L2 7L0.5 6L2 5L1.3 3.3L3 3L3.3 1.3L5 2Z" fill="#e6ebfa"/><circle cx="6" cy="6" r="2" fill="#5d6b99"/></svg><svg class="r" style="left:1840px;top:106px" width="9" height="5"><path d="M0 0H9L4.5 5Z" fill="#c8d0ea"/></svg><svg class="r" style="left:1857px;top:102px" width="8" height="13"><path d="M1.5 0.5H6.5V7.5H1.5ZM0 7.5H8M4 7.5V13" fill="#c8d0ea" stroke="#c8d0ea"/></svg><svg class="r" style="left:1872px;top:104px" width="10" height="10"><path d="M0.5 0.5L9.5 9.5M9.5 0.5L0.5 9.5" stroke="#c8d0ea" stroke-width="1.3"/></svg><svg class="r" style="left:1443px;top:125px" width="16" height="17"><path d="M5.5 1.5H14.5V10.5H5.5Z" fill="#fff" stroke="#1e1e1e"/><path d="M7.5 4H12.5M7.5 6H12.5M7.5 8H12.5" stroke="#1e1e1e"/><path d="M1 9L5 12L9 8V16L5 12L1 15Z" fill="none" stroke="#8a4fd0" stroke-width="1.6"/></svg><div class="r" style="left:1465px;top:123px;width:1px;height:20px;background:#8e98b8;"></div><svg class="r" style="left:1473px;top:125px" width="15" height="16"><path d="M0 0.5H4L2 3Z" fill="#1e6fcf"/><path d="M2 2V5" stroke="#1e6fcf"/><circle cx="8.5" cy="9.5" r="5" fill="none" stroke="#1e1e1e" stroke-width="1.1"/><path d="M8.5 6.5V9.5H11" fill="none" stroke="#1e1e1e"/></svg><svg class="r" style="left:1497px;top:133px" width="6" height="4"><path d="M0 0H6L3 3.5Z" fill="#1e1e1e"/></svg><svg class="r" style="left:1509px;top:125px" width="16" height="16"><path d="M3.5 0.5H15.5V12.5M0.5 3.5H12.5V15.5H0.5Z" fill="#b9c2dc" stroke="#1e1e1e"/><path d="M3 9.5H10" stroke="#1e1e1e" stroke-width="1.2"/></svg><div class="r" style="left:1527px;top:121px;width:22px;height:23px;box-sizing:border-box;border:1px solid #b38622;background:#fff0c9"></div><svg class="r" style="left:1531px;top:125px" width="15" height="15"><path d="M4.5 0.5H14.5V10.5H4.5ZM0.5 4.5H10.5V14.5H0.5Z" fill="none" stroke="#1e1e1e"/><path d="M4.5 4.5H10.5V10.5H4.5Z" fill="#d9cfb8"/></svg><div class="r" style="left:1552px;top:123px;width:1px;height:20px;background:#8e98b8;"></div><div class="r" style="left:1558px;top:122px;width:22px;height:22px;box-sizing:border-box;border:1px solid #b38622;background:#fff0c9"></div><svg class="r" style="left:1562px;top:125px" width="15" height="15"><rect x="1" y="0.5" width="3" height="3" fill="none" stroke="#1e1e1e"/><rect x="6" y="5.5" width="3" height="3" fill="none" stroke="#1e1e1e"/><rect x="10.5" y="10.5" width="3.5" height="3.5" fill="none" stroke="#1e1e1e"/><path d="M3 3.5L6 6M8.5 8.5L11 11" stroke="#1e1e1e"/></svg><svg class="r" style="left:1583px;top:133px" width="6" height="4"><path d="M0 0H6L3 3.5Z" fill="#1e1e1e"/></svg><div class="r" style="left:1595px;top:123px;width:1px;height:20px;background:#8e98b8;"></div><svg class="r" style="left:1603px;top:126px" width="15" height="15"><path d="M1 14L8 7" stroke="#1e1e1e" stroke-width="2"/><path d="M7 7A4 4 0 0 1 12 1.5L10 4.5L11 6L14 4A4 4 0 0 1 8.5 8.5" fill="#1e1e1e"/></svg><div class="r" style="left:1622px;top:121px;width:22px;height:23px;box-sizing:border-box;border:1px solid #b38622;background:#fff0c9"></div><svg class="r" style="left:1625px;top:127px" width="17" height="11"><path d="M1 8.5H14M3.5 8.5V5.5H12.5V8.5" fill="none" stroke="#1e1e1e" stroke-width="1.1"/><path d="M14 1V3M15.5 4.5H13M14 6V6.5" stroke="#d8a020"/></svg><svg class="r" style="left:1858px;top:151px" width="14" height="14"><circle cx="8.5" cy="5.5" r="3.8" fill="none" stroke="#5a5a5a" stroke-width="1.5"/><path d="M5.8 8.2L1.5 12.5" stroke="#5a5a5a" stroke-width="2"/></svg><svg class="r" style="left:1876px;top:156px" width="7" height="4"><path d="M0 0H7L3.5 4Z" fill="#1e1e1e"/></svg>
<div class="t" style="left:44px;top:10.34px;font-size:12px;font-weight:normal;color:#1e1e1e;transform:scaleX(0.9305);">File</div><div class="t" style="left:82px;top:10.34px;font-size:12px;font-weight:normal;color:#1e1e1e;transform:scaleX(0.9668);">Edit</div><div class="t" style="left:122px;top:10.34px;font-size:12px;font-weight:normal;color:#1e1e1e;transform:scaleX(0.9303);">View</div><div class="t" style="left:167px;top:10.34px;font-size:12px;font-weight:normal;color:#1e1e1e;transform:scaleX(0.9124);">Git</div><div class="t" style="left:202px;top:10.34px;font-size:12px;font-weight:normal;color:#1e1e1e;transform:scaleX(0.9904);">Project</div><div class="t" style="left:259px;top:10.34px;font-size:12px;font-weight:normal;color:#1e1e1e;transform:scaleX(0.9742);">Build</div><div class="t" style="left:306px;top:10.34px;font-size:12px;font-weight:normal;color:#1e1e1e;transform:scaleX(0.9611);">Debug</div><div class="t" style="left:361px;top:10.34px;font-size:12px;font-weight:normal;color:#1e1e1e;transform:scaleX(0.9993);">Test</div><div class="t" style="left:401px;top:10.34px;font-size:12px;font-weight:normal;color:#1e1e1e;transform:scaleX(0.9601);">Analyze</div><div class="t" style="left:462px;top:10.34px;font-size:12px;font-weight:normal;color:#1e1e1e;transform:scaleX(0.9994);">Tools</div><div class="t" style="left:509px;top:10.34px;font-size:12px;font-weight:normal;color:#1e1e1e;transform:scaleX(0.9540);">Extensions</div><div class="t" style="left:585px;top:10.34px;font-size:12px;font-weight:normal;color:#1e1e1e;transform:scaleX(1.0307);">Window</div><div class="t" style="left:649px;top:10.34px;font-size:12px;font-weight:normal;color:#1e1e1e;transform:scaleX(1.0127);">Help</div><div class="t" style="left:800px;top:10.34px;font-size:12px;font-weight:normal;color:#2c3e78;transform:scaleX(0.9426);">Radzen</div><div class="t" style="left:725px;top:10.34px;font-size:12px;font-weight:normal;color:#1e1e1e;transform:scaleX(0.9203);">Search</div><div class="t" style="left:11px;top:101.84px;font-size:12px;font-weight:normal;color:#1e1e1e;transform:scaleX(0.9546);">DataListLoadData.razor</div><div class="t" style="left:1440px;top:102.84px;font-size:12px;font-weight:normal;color:#ffffff;transform:scaleX(0.9848);">Solution Explorer</div><div class="t" style="left:1443px;top:151.84px;font-size:12px;font-weight:normal;color:#6d6d6d;transform:scaleX(0.9707);">Search Solution Explorer (Ctrl+;)</div><div class="t" style="left:1524.5px;top:174.24px;font-size:12px;font-weight:normal;color:#1e1e1e;transform:scaleX(0.9660);">DataGridSortApiPage.razor</div><div class="t" style="left:1524.5px;top:193.24px;font-size:12px;font-weight:normal;color:#1e1e1e;transform:scaleX(0.9660);">DataGridSortPage.razor</div><div class="t" style="left:1524.5px;top:212.24px;font-size:12px;font-weight:normal;color:#1e1e1e;transform:scaleX(0.9660);">DataGridVirtualization.razor</div><div class="t" style="left:1524.5px;top:231.24px;font-size:12px;font-weight:normal;color:#1e1e1e;transform:scaleX(0.9660);">DataGridVirtualizationLoadData.razor</div><div class="t" style="left:1524.5px;top:250.24px;font-size:12px;font-weight:normal;color:#1e1e1e;transform:scaleX(0.9660);">DataGridVirtualizationLoadDataPage.razor</div><div class="t" style="left:1524.5px;top:269.24px;font-size:12px;font-weight:normal;color:#1e1e1e;transform:scaleX(0.9660);">DataGridVirtualizationPage.razor</div><div class="t" style="left:1524.5px;top:288.24px;font-size:12px;font-weight:normal;color:#1e1e1e;transform:scaleX(0.9660);">DataListIQueryable.razor</div><div class="t" style="left:1524.5px;top:307.24px;font-size:12px;font-weight:normal;color:#1e1e1e;transform:scaleX(0.9660);">DataListLoadData.razor</div><div class="t" style="left:1524.5px;top:326.24px;font-size:12px;font-weight:normal;color:#1e1e1e;transform:scaleX(0.9660);">DataListLoadDataPage.razor</div><div class="t" style="left:1524.5px;top:345.24px;font-size:12px;font-weight:normal;color:#1e1e1e;transform:scaleX(0.9660);">DataListPage.razor</div><div class="t" style="left:1524.5px;top:364.24px;font-size:12px;font-weight:normal;color:#1e1e1e;transform:scaleX(0.9660);">DatePickerBindValue.razor</div><div class="t" style="left:1524.5px;top:383.24px;font-size:12px;font-weight:normal;color:#1e1e1e;transform:scaleX(0.9660);">DatePickerCalendar.razor</div><div class="t" style="left:1524.5px;top:402.24px;font-size:12px;font-weight:normal;color:#1e1e1e;transform:scaleX(0.9660);">DatePickerChangeEvent.razor</div><div class="t" style="left:1524.5px;top:421.24px;font-size:12px;font-weight:normal;color:#1e1e1e;transform:scaleX(0.9660);">DatePickerFooterTemplate.razor</div><div class="t" style="left:1524.5px;top:440.24px;font-size:12px;font-weight:normal;color:#1e1e1e;transform:scaleX(0.9660);">DatePickerHourFormat.razor</div><div class="t" style="left:1524.5px;top:459.24px;font-size:12px;font-weight:normal;color:#1e1e1e;transform:scaleX(0.9660);">DatePickerInitialViewDate.razor</div><div class="t" style="left:1524.5px;top:478.24px;font-size:12px;font-weight:normal;color:#1e1e1e;transform:scaleX(0.9660);">DatePickerMinMax.razor</div><div class="t" style="left:1524.5px;top:497.24px;font-size:12px;font-weight:normal;color:#1e1e1e;transform:scaleX(0.9660);">DatePickerPage.razor</div><div class="t" style="left:1524.5px;top:516.24px;font-size:12px;font-weight:normal;color:#1e1e1e;transform:scaleX(0.9660);">DatePickerParseInput.razor</div><div class="t" style="left:1524.5px;top:535.24px;font-size:12px;font-weight:normal;color:#1e1e1e;transform:scaleX(0.9660);">DatePickerSpecialDates.razor</div><div class="t" style="left:1524.5px;top:554.24px;font-size:12px;font-weight:normal;color:#1e1e1e;transform:scaleX(0.9660);">DatePickerTimeOnly.razor</div><div class="t" style="left:1524.5px;top:573.24px;font-size:12px;font-weight:normal;color:#1e1e1e;transform:scaleX(0.9660);">DatePickerWithTime.razor</div><div class="t" style="left:1524.5px;top:592.24px;font-size:12px;font-weight:normal;color:#1e1e1e;transform:scaleX(0.9660);">DialogAlert.razor</div><div class="t" style="left:1524.5px;top:611.24px;font-size:12px;font-weight:normal;color:#1e1e1e;transform:scaleX(0.9660);">DialogBusy.razor</div><div class="t" style="left:1524.5px;top:630.24px;font-size:12px;font-weight:normal;color:#1e1e1e;transform:scaleX(0.9660);">DialogCardPage.razor</div><div class="t" style="left:1524.5px;top:649.24px;font-size:12px;font-weight:normal;color:#1e1e1e;transform:scaleX(0.9660);">DialogConfirm.razor</div><div class="t" style="left:1524.5px;top:668.24px;font-size:12px;font-weight:normal;color:#1e1e1e;transform:scaleX(0.9660);">DialogCss.razor</div><div class="t" style="left:1524.5px;top:687.24px;font-size:12px;font-weight:normal;color:#1e1e1e;transform:scaleX(0.9660);">DialogInline.razor</div><div class="t" style="left:1524.5px;top:706.24px;font-size:12px;font-weight:normal;color:#1e1e1e;transform:scaleX(0.9660);">DialogOverlayClose.razor</div><div class="t" style="left:1524.5px;top:725.24px;font-size:12px;font-weight:normal;color:#1e1e1e;transform:scaleX(0.9660);">DialogPage.razor</div><div class="t" style="left:1524.5px;top:744.24px;font-size:12px;font-weight:normal;color:#1e1e1e;transform:scaleX(0.9660);">DialogSide.razor</div><div class="t" style="left:1524.5px;top:763.24px;font-size:12px;font-weight:normal;color:#1e1e1e;transform:scaleX(0.9660);">DialogSideContent.razor</div><div class="t" style="left:1524.5px;top:782.24px;font-size:12px;font-weight:normal;color:#1e1e1e;transform:scaleX(0.9660);">DialogWithPage.razor</div><div class="t" style="left:1524.5px;top:801.24px;font-size:12px;font-weight:normal;color:#1e1e1e;transform:scaleX(0.9660);">DonutChartConfig.razor</div><div class="t" style="left:1524.5px;top:820.24px;font-size:12px;font-weight:normal;color:#1e1e1e;transform:scaleX(0.9660);">DonutChartPage.razor</div><div class="t" style="left:1524.5px;top:839.24px;font-size:12px;font-weight:normal;color:#1e1e1e;transform:scaleX(0.9660);">DropDownBindValue.razor</div><div class="t" style="left:1524.5px;top:858.24px;font-size:12px;font-weight:normal;color:#1e1e1e;transform:scaleX(0.9660);">DropDownChangeEvent.razor</div><div class="t" style="left:1524.5px;top:877.24px;font-size:12px;font-weight:normal;color:#1e1e1e;transform:scaleX(0.9660);">DropDownClear.razor</div><div class="t" style="left:1524.5px;top:896.24px;font-size:12px;font-weight:normal;color:#1e1e1e;transform:scaleX(0.9660);">DropDownCustomObjects.razor</div><div class="t" style="left:1524.5px;top:915.24px;font-size:12px;font-weight:normal;color:#1e1e1e;transform:scaleX(0.9660);">DropDownCustomObjectsPage.razor</div><div class="t" style="left:1524.5px;top:934.24px;font-size:12px;font-weight:normal;color:#1e1e1e;transform:scaleX(0.9660);">DropDownDataGridBindValue.razor</div><div class="t" style="left:1524.5px;top:953.24px;font-size:12px;font-weight:normal;color:#1e1e1e;transform:scaleX(0.9660);">DropDownDataGridChangeEvent.razor</div><div class="t" style="left:1524.5px;top:972.24px;font-size:12px;font-weight:normal;color:#1e1e1e;transform:scaleX(0.9660);">DropDownDataGridColumns.razor</div><div class="t" style="left:1524.5px;top:991.24px;font-size:12px;font-weight:normal;color:#1e1e1e;transform:scaleX(0.9660);">DropDownDataGridConfig.razor</div><div class="t" style="left:1441px;top:1007.84px;font-size:12px;font-weight:normal;color:#1e1e1e;transform:scaleX(0.9738);">Solution Explorer</div><div class="t" style="left:1543px;top:1007.84px;font-size:12px;font-weight:normal;color:#e6ebfa;transform:scaleX(0.9445);">Git Changes</div><div class="t" style="left:1619px;top:1007.84px;font-size:12px;font-weight:normal;color:#e6ebfa;transform:scaleX(0.9689);">Properties</div><div class="t" style="left:9px;top:1010.84px;font-size:12px;font-weight:normal;color:#1e1e1e;transform:scaleX(0.8772);">97 %</div><div class="t" style="left:107px;top:1010.84px;font-size:12px;font-weight:normal;color:#1e1e1e;transform:scaleX(0.9644);">No issues found</div><div class="t" style="left:1255px;top:1010.84px;font-size:12px;font-weight:normal;color:#1e1e1e;transform:scaleX(0.9288);">Ln: 79</div><div class="t" style="left:1303px;top:1010.84px;font-size:12px;font-weight:normal;color:#1e1e1e;transform:scaleX(0.9050);">Ch: 10</div><div class="t" style="left:1354px;top:1010.84px;font-size:12px;font-weight:normal;color:#1e1e1e;transform:scaleX(0.8101);">SPC</div><div class="t" style="left:1394px;top:1010.84px;font-size:12px;font-weight:normal;color:#1e1e1e;transform:scaleX(0.7657);">CRLF</div><div class="t" style="left:6px;top:1032.84px;font-size:12px;font-weight:normal;color:#f4f6fc;transform:scaleX(0.9439);">Call Stack</div><div class="t" style="left:69px;top:1032.84px;font-size:12px;font-weight:normal;color:#f4f6fc;transform:scaleX(0.9783);">Breakpoints</div><div class="t" style="left:143px;top:1032.84px;font-size:12px;font-weight:normal;color:#f4f6fc;transform:scaleX(0.9758);">Exception Settings</div><div class="t" style="left:252px;top:1032.84px;font-size:12px;font-weight:normal;color:#f4f6fc;transform:scaleX(1.0259);">Command Window</div><div class="t" style="left:368px;top:1032.84px;font-size:12px;font-weight:normal;color:#f4f6fc;transform:scaleX(1.0191);">Immediate Window</div><div class="t" style="left:484px;top:1032.84px;font-size:12px;font-weight:normal;color:#f4f6fc;transform:scaleX(1.0546);">Output</div><div class="t" style="left:534px;top:1032.84px;font-size:12px;font-weight:normal;color:#f4f6fc;transform:scaleX(0.9352);">Error List ...</div><div class="t" style="left:604px;top:1032.84px;font-size:12px;font-weight:normal;color:#f4f6fc;transform:scaleX(1.0102);">Autos</div><div class="t" style="left:647px;top:1032.84px;font-size:12px;font-weight:normal;color:#f4f6fc;transform:scaleX(0.9514);">Locals</div><div class="t" style="left:692px;top:1032.84px;font-size:12px;font-weight:normal;color:#f4f6fc;transform:scaleX(0.9867);">Watch 1</div><div class="t" style="left:747px;top:1032.84px;font-size:12px;font-weight:normal;color:#f4f6fc;transform:scaleX(0.9601);">Developer PowerShell</div><div class="t" style="left:873px;top:1032.84px;font-size:12px;font-weight:normal;color:#f4f6fc;transform:scaleX(0.9766);">F# Interactive</div><div class="t" style="left:28px;top:1061.84px;font-size:12px;font-weight:normal;color:#ffffff;transform:scaleX(0.9225);">Ready</div><div class="t" style="left:1525px;top:1061.84px;font-size:12px;font-weight:normal;color:#ffffff;transform:scaleX(0.9846);">0 / 0</div><div class="t" style="left:1606px;top:1061.84px;font-size:12px;font-weight:normal;color:#ffffff;transform:scaleX(0.7477);">1</div><div class="t" style="left:1656px;top:1061.84px;font-size:12px;font-weight:normal;color:#ffffff;transform:scaleX(0.9540);">master</div><div class="t" style="left:1756px;top:1061.84px;font-size:12px;font-weight:normal;color:#ffffff;transform:scaleX(0.9790);">blazor.radzen.com</div><div class="t" style="left:279px;top:38.84px;font-size:12px;font-weight:normal;color:#8d8d8d;transform:scaleX(0.9611);">Debug</div><div class="t" style="left:350px;top:38.84px;font-size:12px;font-weight:normal;color:#8d8d8d;transform:scaleX(0.9725);">Any CPU</div><div class="t" style="left:466px;top:38.84px;font-size:12px;font-weight:normal;color:#8d8d8d;transform:scaleX(0.9536);">RadzenBlazorDemos.Server</div><div class="t" style="left:689.5px;top:39.84px;font-size:12px;font-weight:normal;color:#767676;transform:scaleX(0.9990);">Continue</div><div class="t" style="left:1390px;top:39.84px;font-size:12px;font-weight:normal;color:#1e1e1e;transform:scaleX(1.0154);">Application Insights</div><div class="t" style="left:1846px;top:39.84px;font-size:12px;font-weight:bold;color:#ffffff;transform:scaleX(0.8492);">PREVIEW</div><div class="t" style="left:23px;top:65.84px;font-size:12px;font-weight:normal;color:#1e1e1e;transform:scaleX(0.8996);">Process:</div><div class="t" style="left:76px;top:64.84px;font-size:12px;font-weight:normal;color:#1e1e1e;transform:scaleX(0.9350);">[18900] RadzenBlazorDemos.Serve</div><div class="t" style="left:299px;top:65.84px;font-size:12px;font-weight:normal;color:#767676;transform:scaleX(0.9571);">Lifecycle Events</div><div class="t" style="left:400px;top:65.84px;font-size:12px;font-weight:normal;color:#767676;transform:scaleX(0.9188);">Thread:</div><div class="t" style="left:717px;top:65.84px;font-size:12px;font-weight:normal;color:#767676;transform:scaleX(0.9249);">Stack Frame:</div>
</body></html>
